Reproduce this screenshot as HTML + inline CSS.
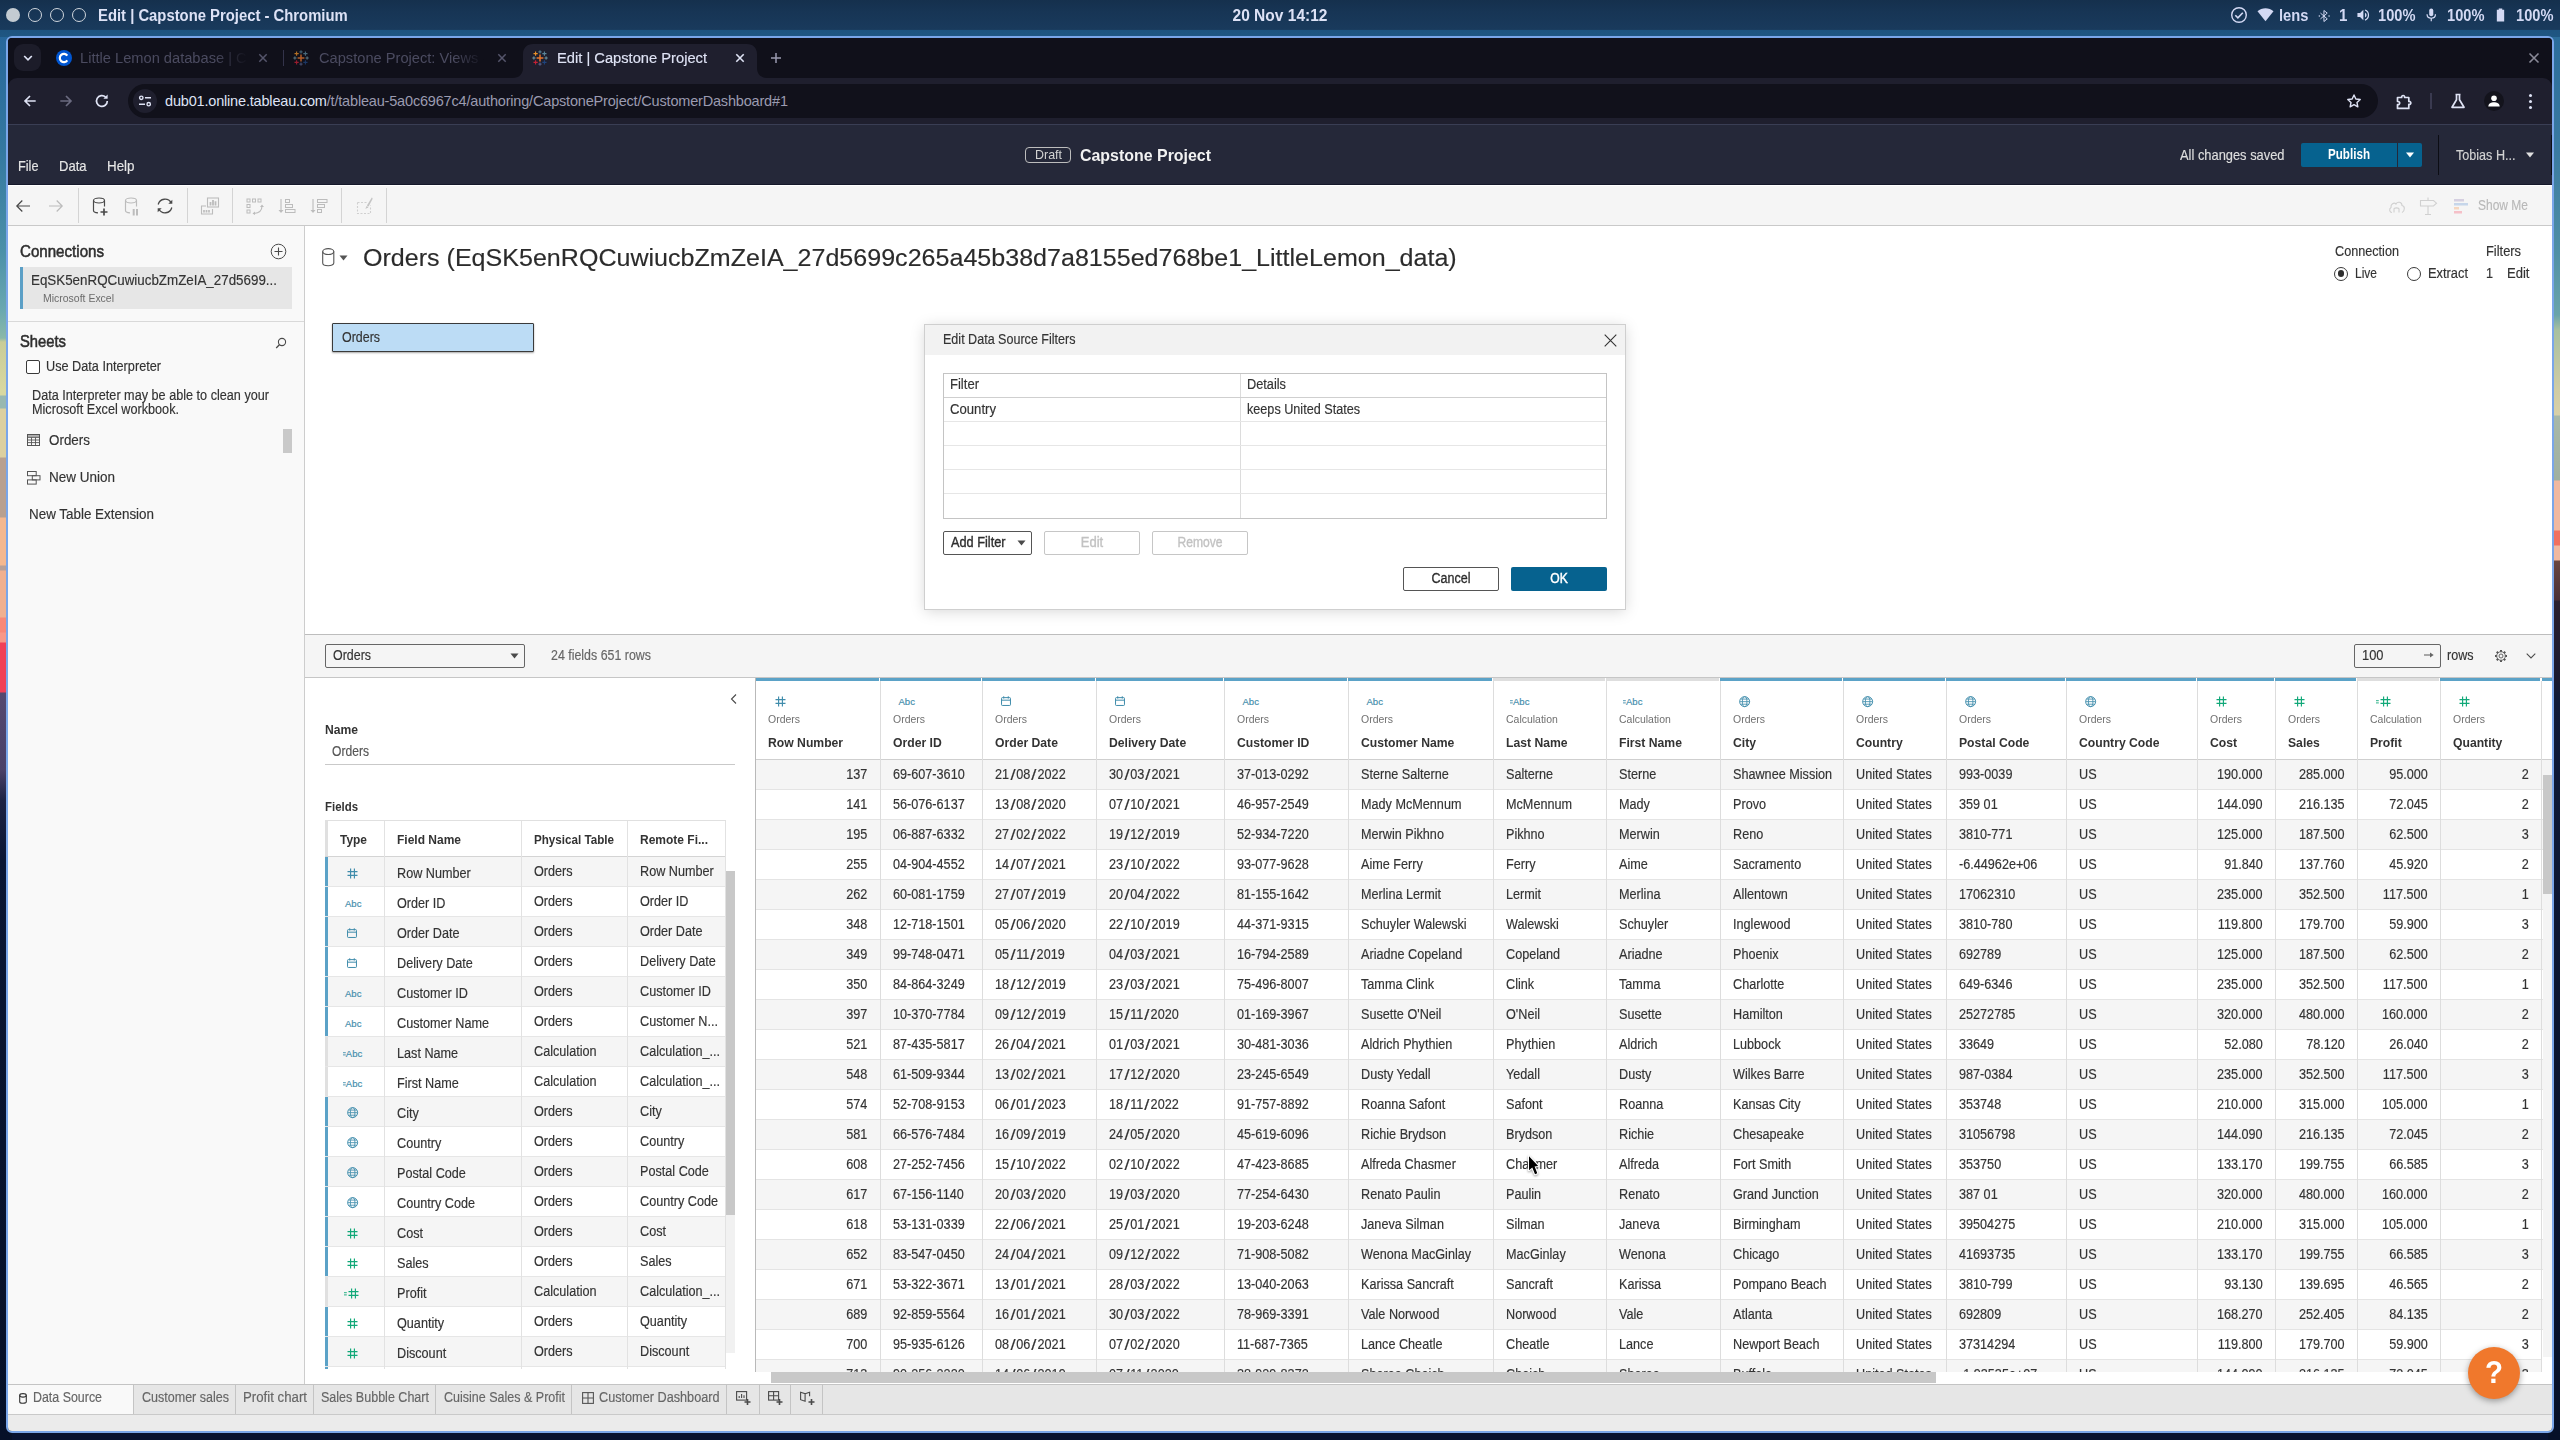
<!DOCTYPE html><html><head><meta charset="utf-8"><title>Edit | Capstone Project</title><style>
html,body{margin:0;padding:0;width:2560px;height:1440px;overflow:hidden;background:#071230;}
body{position:relative;font-family:"Liberation Sans",sans-serif;}
div{box-sizing:content-box;} svg{display:block;overflow:visible;}
</style></head><body>
<div style="position:absolute;left:0;top:0;width:2560px;height:1440px;background:#071230"></div>
<div style="position:absolute;left:0;top:0;width:12px;height:1440px;background:linear-gradient(to bottom,#1f5682 0px,#27669a 36px,#3478a0 150px,#4a90a8 250px,#6aa8b0 310px,#8ab8a8 338px,#c8cc98 342px,#d8d8a0 390px,#d8d8a0 395px,#98b8b0 396px,#98b8b0 408px,#dcd0a0 409px,#dcd0a0 457px,#b8a090 458px,#b8a090 517px,#f4b890 518px,#f4b890 565px,#b8a098 566px,#b8a098 570px,#f0b090 571px,#f0b090 617px,#f88878 618px,#f88878 632px,#f89888 633px,#f89888 642px,#f04058 643px,#f04058 692px,#544870 693px,#4a4068 770px,#1c2244 800px,#0a1634 860px,#061028 1440px)"></div>
<div style="position:absolute;left:2548px;top:0;width:12px;height:1440px;background:linear-gradient(to bottom,#1f5682 0px,#2b6c9a 36px,#3a7aa0 150px,#4f8fa5 250px,#6aa4aa 315px,#a8c0a0 330px,#d0cca4 390px,#d8d0a8 415px,#a8b8a8 416px,#a0b0a0 480px,#f0b8a0 481px,#f0b8a0 530px,#f07060 531px,#f07060 545px,#f0b8a0 546px,#f0b8a0 560px,#6a4640 561px,#4a3038 600px,#2a2030 601px,#1a1a30 680px,#0f1a38 700px,#061028 1440px)"></div>
<div style="position:absolute;left:0;top:0;width:2560px;height:37px;background:linear-gradient(to bottom,#15304d 0px,#173555 12px,#193a5c 29px,#1b3f62 30px,#1e5480 30.5px,#1f5783 37px)"></div>
<div style="position:absolute;left:6px;top:8px;width:14px;height:14px;background:#c3cbd2;border-radius:50%;"></div>
<div style="position:absolute;left:28px;top:8px;width:14px;height:14px;border-radius:50%;border:1.3px solid #cfd5dc;box-sizing:border-box;"></div>
<div style="position:absolute;left:50px;top:8px;width:14px;height:14px;border-radius:50%;border:1.3px solid #cfd5dc;box-sizing:border-box;"></div>
<div style="position:absolute;left:72px;top:8px;width:14px;height:14px;border-radius:50%;border:1.3px solid #cfd5dc;box-sizing:border-box;"></div>
<div style="position:absolute;top:5px;font-size:16.80px;line-height:22px;color:#dde2f6;white-space:pre;font-weight:bold;left:98.0px;transform:scaleX(0.8838);transform-origin:0 50%;">Edit | Capstone Project - Chromium</div>
<div style="position:absolute;top:5px;font-size:16.80px;line-height:22px;color:#dde2f6;white-space:pre;font-weight:bold;left:1079.5px;width:400px;text-align:center;transform:scaleX(0.9247);transform-origin:50% 50%;">20 Nov 14:12</div>
<svg style="position:absolute;left:2230px;top:6px;" width="18" height="18" viewBox="0 0 18 18" fill="none"><circle cx="9" cy="9" r="7.3" stroke="#d3d9f4" stroke-width="1.4"/><path d="M5.3 9.3l2.6 2.6 4.9-5.2" stroke="#d3d9f4" stroke-width="1.6"/></svg>
<svg style="position:absolute;left:2257px;top:8px;" width="17" height="14" viewBox="0 0 17 14" fill="none"><path d="M0.5 3.2C2.7 1.3 5.5 0.3 8.5 0.3s5.8 1 8 2.9L8.5 13.2z" fill="#d3d9f4"/></svg>
<div style="position:absolute;top:5px;font-size:16.80px;line-height:22px;color:#d3d9f4;white-space:pre;font-weight:bold;left:2278.5px;transform:scaleX(0.8775);transform-origin:0 50%;">lens</div>
<svg style="position:absolute;left:2317.5px;top:8.5px;" width="12.4" height="14" viewBox="0 0 15 17" fill="none"><path d="M3 5l8.2 7-4 3.2V1.8l4 3.2L3 12" stroke="#d3d9f4" stroke-width="1.2"/><circle cx="1.6" cy="8.5" r="0.9" fill="#d3d9f4"/><circle cx="13.4" cy="8.5" r="0.9" fill="#d3d9f4"/></svg>
<div style="position:absolute;top:5px;font-size:16.80px;line-height:22px;color:#d3d9f4;white-space:pre;font-weight:bold;left:2339.0px;transform:scaleX(0.9020);transform-origin:0 50%;">1</div>
<svg style="position:absolute;left:2357px;top:9px;" width="12.2" height="12.2" viewBox="0 0 14 14" fill="none"><path d="M0.5 4.7h3L7.3 1v12L3.5 9.3h-3z" fill="#d3d9f4"/><path d="M9.2 4.2c1.2.7 1.8 1.6 1.8 2.8s-.6 2.1-1.8 2.8z" fill="#d3d9f4"/><path d="M9.2 1.2c2.4.8 4 3 4 5.8s-1.6 5-4 5.800" stroke="#d3d9f4" stroke-width="1.4"/></svg>
<div style="position:absolute;top:5px;font-size:16.80px;line-height:22px;color:#d3d9f4;white-space:pre;font-weight:bold;left:2377.5px;transform:scaleX(0.8727);transform-origin:0 50%;">100%</div>
<svg style="position:absolute;left:2425.7px;top:8.3px;" width="10.5" height="14" viewBox="0 0 12 16" fill="none"><rect x="3.7" y="0.5" width="4.6" height="9" rx="2.3" fill="#d3d9f4"/><path d="M1.2 7.2c0 2.6 2.100 4.500 4.800 4.500s4.800-1.900 4.800-4.500M6 11.700V15" stroke="#d3d9f4" stroke-width="1.4"/></svg>
<div style="position:absolute;top:5px;font-size:16.80px;line-height:22px;color:#d3d9f4;white-space:pre;font-weight:bold;left:2446.5px;transform:scaleX(0.8727);transform-origin:0 50%;">100%</div>
<svg style="position:absolute;left:2495.5px;top:8px;" width="9" height="14" viewBox="0 0 10 16" fill="none"><path d="M3 0.5h4v1.5h2.2v13.500H0.800V2H3z" fill="#d3d9f4"/></svg>
<div style="position:absolute;top:5px;font-size:16.80px;line-height:22px;color:#d3d9f4;white-space:pre;font-weight:bold;left:2515.5px;transform:scaleX(0.8727);transform-origin:0 50%;">100%</div>
<div style="position:absolute;left:6px;top:36px;width:2544px;height:1393px;border:2px solid #7aa6e9;border-radius:6px;background:#10101a"></div>
<div id="win" style="position:absolute;left:0;top:0;width:2560px;height:1440px;clip-path:inset(38px 8px 9px 8px round 4px);">
<div style="position:absolute;left:8px;top:38px;width:2544px;height:40px;background:#10101a;"></div>
<div style="position:absolute;left:8px;top:78px;width:2544px;height:46px;background:#1f1f2e;border-radius:9px 9px 0 0;"></div>
<div style="position:absolute;left:8px;top:124px;width:2544px;height:1px;background:#3a3e54;"></div>
<div style="position:absolute;left:14px;top:44px;width:27px;height:27px;background:#1c1c29;border-radius:9px;"></div>
<svg style="position:absolute;left:22px;top:53px;" width="12" height="10" viewBox="0 0 12 10" fill="none"><path d="M2.2 3l3.800 3.800L9.800 3" stroke="#dfe3f5" stroke-width="1.7"/></svg>
<div style="position:absolute;left:56px;top:50px;width:16px;height:16px;background:#0056d2;border-radius:50%;"></div>
<svg style="position:absolute;left:56px;top:50px;" width="16" height="16" viewBox="0 0 16 16" fill="none"><path d="M11.3 5.700A4.100 4.100 0 1 0 11.300 10.300" stroke="#fff" stroke-width="2.2"/></svg>
<div style="position:absolute;left:80px;top:47px;width:168px;height:22px;overflow:hidden;-webkit-mask-image:linear-gradient(to right,#000 80%,transparent 100%);">
<div style="font-size:15.5px;line-height:22px;color:#4b4b60;white-space:pre;transform:scaleX(0.945);transform-origin:0 50%;">Little Lemon database | Coursera</div></div>
<svg style="position:absolute;left:258px;top:53px;" width="10" height="10" viewBox="0 0 10 10" fill="none"><path d="M1.300 1.300l7.400 7.400M8.700 1.300l-7.400 7.400" stroke="#55556b" stroke-width="1.500"/></svg>
<div style="position:absolute;left:283px;top:50px;width:1px;height:16px;background:#33334a;"></div>
<svg style="position:absolute;left:293px;top:50px;opacity:0.75;" width="16" height="16" viewBox="0 0 16 16" fill="none"><path d="M8 4.6v6.8M4.6 8h6.8" stroke="#e8762d" stroke-width="1.5"/><path d="M8 0.3v3.2M6.4 1.9h3.2" stroke="#59879b" stroke-width="1"/><path d="M8 12.5v3.2M6.4 14.1h3.2" stroke="#5b6591" stroke-width="1"/><path d="M1.9 6.4v3.2M0.3 8h3.2" stroke="#7199a6" stroke-width="1"/><path d="M14.1 6.4v3.2M12.5 8h3.2" stroke="#7199a6" stroke-width="1"/><path d="M3.6 1.5v4.2M1.5 3.6h4.2" stroke="#eb9129" stroke-width="1.1"/><path d="M12.4 1.5v4.2M10.3 3.6h4.2" stroke="#5b879b" stroke-width="1.1"/><path d="M3.6 10.3v4.2M1.5 12.4h4.2" stroke="#c72035" stroke-width="1.1"/><path d="M12.4 10.3v4.2M10.3 12.4h4.2" stroke="#1f447e" stroke-width="1.1"/></svg>
<div style="position:absolute;left:318.500px;top:47px;width:165px;height:22px;overflow:hidden;-webkit-mask-image:linear-gradient(to right,#000 82%,transparent 100%);">
<div style="font-size:15.5px;line-height:22px;color:#4b4b60;white-space:pre;transform:scaleX(0.945);transform-origin:0 50%;">Capstone Project: Views - Tableau</div></div>
<svg style="position:absolute;left:497px;top:53px;" width="10" height="10" viewBox="0 0 10 10" fill="none"><path d="M1.300 1.300l7.400 7.400M8.700 1.300l-7.400 7.400" stroke="#55556b" stroke-width="1.500"/></svg>
<svg style="position:absolute;left:513px;top:44px" width="254" height="34" viewBox="0 0 254 34"><path d="M0 34C6 34 10 30 10 24V10C10 4 14 0 20 0H234C240 0 244 4 244 10V24C244 30 248 34 254 34z" fill="#1f1f2e"/></svg>
<svg style="position:absolute;left:532px;top:50px;opacity:1;" width="16" height="16" viewBox="0 0 16 16" fill="none"><path d="M8 4.6v6.8M4.6 8h6.8" stroke="#e8762d" stroke-width="1.5"/><path d="M8 0.3v3.2M6.4 1.9h3.2" stroke="#59879b" stroke-width="1"/><path d="M8 12.5v3.2M6.4 14.1h3.2" stroke="#5b6591" stroke-width="1"/><path d="M1.9 6.4v3.2M0.3 8h3.2" stroke="#7199a6" stroke-width="1"/><path d="M14.1 6.4v3.2M12.5 8h3.2" stroke="#7199a6" stroke-width="1"/><path d="M3.6 1.5v4.2M1.5 3.6h4.2" stroke="#eb9129" stroke-width="1.1"/><path d="M12.4 1.5v4.2M10.3 3.6h4.2" stroke="#5b879b" stroke-width="1.1"/><path d="M3.6 10.3v4.2M1.5 12.4h4.2" stroke="#c72035" stroke-width="1.1"/><path d="M12.4 10.3v4.2M10.3 12.4h4.2" stroke="#1f447e" stroke-width="1.1"/></svg>
<div style="position:absolute;top:47px;font-size:15.50px;line-height:22px;color:#dfe3f5;white-space:pre;-webkit-text-stroke:0.16px #dfe3f5;left:556.5px;transform:scaleX(0.9479);transform-origin:0 50%;">Edit | Capstone Project</div>
<svg style="position:absolute;left:735px;top:53px;" width="10" height="10" viewBox="0 0 10 10" fill="none"><path d="M1.300 1.300l7.400 7.400M8.700 1.300l-7.400 7.400" stroke="#dfe3f5" stroke-width="1.600"/></svg>
<svg style="position:absolute;left:770px;top:52px;" width="12" height="12" viewBox="0 0 12 12" fill="none"><path d="M6 1v10M1 6h10" stroke="#9a9ab0" stroke-width="1.500"/></svg>
<svg style="position:absolute;left:2528px;top:52px;" width="12" height="12" viewBox="0 0 12 12" fill="none"><path d="M1.500 1.500l9 9M10.500 1.500l-9 9" stroke="#8a8a98" stroke-width="1.600"/></svg>
<svg style="position:absolute;left:23px;top:94px;" width="14" height="14" viewBox="0 0 16 16" fill="none"><path d="M14.500 8H2.500M8 2.300L2.300 8l5.700 5.700" stroke="#dfe3f5" stroke-width="1.900"/></svg>
<svg style="position:absolute;left:59px;top:94px;" width="14" height="14" viewBox="0 0 16 16" fill="none"><path d="M1.500 8h12M8 2.300L13.700 8 8 13.700" stroke="#6b6b80" stroke-width="1.900"/></svg>
<svg style="position:absolute;left:94px;top:93px;" width="16" height="16" viewBox="0 0 16 16" fill="none"><path d="M13.300 8A5.400 5.400 0 1 1 11.600 4.100" stroke="#dfe3f5" stroke-width="1.700"/><path d="M13.600 1.500v4.200H9.400z" fill="#dfe3f5"/></svg>
<div style="position:absolute;left:128px;top:84px;width:2250px;height:34px;background:#11111b;border-radius:17px;"></div>
<div style="position:absolute;left:133px;top:89px;width:24px;height:24px;background:#1f1f2e;border-radius:50%;"></div>
<svg style="position:absolute;left:138px;top:94px;" width="14" height="14" viewBox="0 0 14 14" fill="none"><circle cx="3.300" cy="3.800" r="1.700" stroke="#dfe3f5" stroke-width="1.400"/><path d="M7 3.800h6" stroke="#dfe3f5" stroke-width="1.500"/><circle cx="10.700" cy="10.200" r="1.700" stroke="#dfe3f5" stroke-width="1.400"/><path d="M1 10.200h6" stroke="#dfe3f5" stroke-width="1.500"/></svg>
<div style="position:absolute;left:165px;top:90px;font-size:14.500px;line-height:22px;letter-spacing:-0.181px;white-space:pre;color:#dfe3f5">dub01.online.tableau.com<span style="color:#9b9bb0">/t/tableau-5a0c6967c4/authoring/CapstoneProject/CustomerDashboard#1</span></div>
<svg style="position:absolute;left:2346px;top:93px;" width="16" height="16" viewBox="0 0 18 18" fill="none"><path d="M9 2.200l2.100 4.500 4.900.600-3.600 3.400.9 4.900L9 13.200l-4.300 2.400.9-4.900L2 7.300l4.900-.600z" stroke="#dfe3f5" stroke-width="1.600" stroke-linejoin="round"/></svg>
<svg style="position:absolute;left:2395px;top:92px;" width="19" height="19" viewBox="0 0 19 19" fill="none"><path d="M2.500 5.500h4.200c-.5-2.700 3.400-2.700 2.900 0h4.200v4c2.700-.5 2.700 3.400 0 2.900v4H2.500v-3.700c2.900.300 2.900-3.500 0-3.200z" stroke="#dfe3f5" stroke-width="1.700" stroke-linejoin="round"/></svg>
<div style="position:absolute;left:2430px;top:93px;width:1.5px;height:16px;background:#3a3a50;"></div>
<svg style="position:absolute;left:2449px;top:92px;" width="18" height="18" viewBox="0 0 18 18" fill="none"><path d="M6.500 2.500h5M7.500 2.500v5.300L3 15.300h12L10.500 7.800V2.500" stroke="#dfe3f5" stroke-width="1.700" stroke-linejoin="round"/></svg>
<div style="position:absolute;left:2484px;top:91px;width:20px;height:20px;background:#13131c;border-radius:50%;"></div>
<svg style="position:absolute;left:2486px;top:93px;" width="16" height="16" viewBox="0 0 16 16" fill="none"><circle cx="8" cy="5.300" r="2.800" fill="#fff"/><path d="M2.300 13.500c0-3 3-4.200 5.700-4.200s5.700 1.200 5.700 4.200z" fill="#fff"/></svg>
<div style="position:absolute;left:2528.5px;top:93.5px;width:3px;height:3px;background:#dfe3f5;border-radius:50%;"></div>
<div style="position:absolute;left:2528.5px;top:99.5px;width:3px;height:3px;background:#dfe3f5;border-radius:50%;"></div>
<div style="position:absolute;left:2528.5px;top:105.5px;width:3px;height:3px;background:#dfe3f5;border-radius:50%;"></div>
<div style="position:absolute;left:8px;top:125px;width:2544px;height:60px;background:#252839;"></div>
<div style="position:absolute;top:156px;font-size:15.00px;line-height:20px;color:#e6e6e6;white-space:pre;-webkit-text-stroke:0.16px #e6e6e6;left:18.0px;transform:scaleX(0.8481);transform-origin:0 50%;">File</div>
<div style="position:absolute;top:156px;font-size:15.00px;line-height:20px;color:#e6e6e6;white-space:pre;-webkit-text-stroke:0.16px #e6e6e6;left:59.0px;transform:scaleX(0.8679);transform-origin:0 50%;">Data</div>
<div style="position:absolute;top:156px;font-size:15.00px;line-height:20px;color:#e6e6e6;white-space:pre;-webkit-text-stroke:0.16px #e6e6e6;left:107.0px;transform:scaleX(0.8914);transform-origin:0 50%;">Help</div>
<div style="position:absolute;left:1025px;top:147px;width:46px;height:16px;border:1px solid #bdbdbd;border-radius:4px;box-sizing:border-box;"></div>
<div style="position:absolute;top:145px;font-size:13.00px;line-height:20px;color:#d4d4d4;white-space:pre;left:1034.5px;transform:scaleX(0.9584);transform-origin:0 50%;">Draft</div>
<div style="position:absolute;top:144px;font-size:17.00px;line-height:24px;color:#f2f2f2;white-space:pre;font-weight:bold;left:1079.5px;transform:scaleX(0.9370);transform-origin:0 50%;">Capstone Project</div>
<div style="position:absolute;top:145px;font-size:14.50px;line-height:20px;color:#dedede;white-space:pre;-webkit-text-stroke:0.16px #dedede;left:2180.0px;transform:scaleX(0.8879);transform-origin:0 50%;">All changes saved</div>
<div style="position:absolute;left:2301px;top:143px;width:96px;height:24px;background:#06628f;border-radius:2px 0 0 2px;"></div>
<div style="position:absolute;left:2398px;top:143px;width:24px;height:24px;background:#06628f;border-radius:0 2px 2px 0;"></div>
<div style="position:absolute;top:144px;font-size:14.50px;line-height:20px;color:#fff;white-space:pre;font-weight:bold;left:2149.0px;width:400px;text-align:center;transform:scaleX(0.8021);transform-origin:50% 50%;">Publish</div>
<svg style="position:absolute;left:2405px;top:152px;" width="10" height="6" viewBox="0 0 10 6" fill="none"><path d="M1 0.500h8L5 5.500z" fill="#fff"/></svg>
<div style="position:absolute;left:2438px;top:135px;width:1px;height:40px;background:#0c0d14;"></div>
<div style="position:absolute;left:2551px;top:135px;width:1px;height:40px;background:#0c0d14;"></div>
<div style="position:absolute;top:145px;font-size:14.50px;line-height:20px;color:#d2d2d2;white-space:pre;-webkit-text-stroke:0.16px #d2d2d2;left:2456.0px;transform:scaleX(0.8686);transform-origin:0 50%;">Tobias H...</div>
<svg style="position:absolute;left:2525px;top:152px;" width="10" height="6" viewBox="0 0 10 6" fill="none"><path d="M1 0.500h8L5 5.500z" fill="#e0e0e0"/></svg>
<div style="position:absolute;left:8px;top:184px;width:2544px;height:1px;background:#15182a;"></div>
<div style="position:absolute;left:8px;top:185px;width:2544px;height:40px;background:#f5f5f5;"></div>
<div style="position:absolute;left:8px;top:185px;width:2544px;height:1px;background:#ffffff;"></div>
<div style="position:absolute;left:8px;top:225px;width:2544px;height:1px;background:#c9c9c9;"></div>
<div style="position:absolute;left:78px;top:188px;width:1px;height:35px;background:#d4d4d4;"></div>
<div style="position:absolute;left:187px;top:188px;width:1px;height:35px;background:#d4d4d4;"></div>
<div style="position:absolute;left:232px;top:188px;width:1px;height:35px;background:#d4d4d4;"></div>
<div style="position:absolute;left:341px;top:188px;width:1px;height:35px;background:#d4d4d4;"></div>
<div style="position:absolute;left:386px;top:188px;width:1px;height:35px;background:#d4d4d4;"></div>
<svg style="position:absolute;left:15px;top:198px;" width="16" height="16" viewBox="0 0 16 16" fill="none"><path d="M15 8H2M7.300 2.500L1.800 8l5.500 5.500" stroke="#4a4a4a" stroke-width="1.200"/></svg>
<svg style="position:absolute;left:48px;top:198px;" width="16" height="16" viewBox="0 0 16 16" fill="none"><path d="M1 8h13M8.700 2.500L14.200 8l-5.500 5.500" stroke="#bcbcbc" stroke-width="1.200"/></svg>
<svg style="position:absolute;left:92px;top:197px;" width="18" height="20" viewBox="0 0 18 20" fill="none"><ellipse cx="7" cy="3.500" rx="5.500" ry="2.500" stroke="#4a4a4a" stroke-width="1.200"/><path d="M1.500 3.500v10c0 1.200 1.800 2.200 4.500 2.400M12.500 3.500v6" stroke="#4a4a4a" stroke-width="1.200"/><path d="M12 11.500v7M8.500 15h7" stroke="#4a4a4a" stroke-width="1.700"/></svg>
<svg style="position:absolute;left:124px;top:197px;" width="18" height="20" viewBox="0 0 18 20" fill="none"><ellipse cx="7" cy="3.500" rx="5.500" ry="2.500" stroke="#bcbcbc" stroke-width="1.200"/><path d="M1.500 3.500v10c0 1.200 1.800 2.200 4.500 2.400M12.500 3.500v6" stroke="#bcbcbc" stroke-width="1.200"/><path d="M9.700 12v6.500M13 12v6.500" stroke="#bcbcbc" stroke-width="2"/></svg>
<svg style="position:absolute;left:156px;top:197px;" width="18" height="18" viewBox="0 0 18 18" fill="none"><path d="M2.200 7.500A7 7 0 0 1 15.200 6M15.800 10.500A7 7 0 0 1 2.800 12" stroke="#4a4a4a" stroke-width="1.300"/><path d="M16.300 2.800v4h-4z" fill="#4a4a4a"/><path d="M1.700 15.200v-4h4z" fill="#4a4a4a"/></svg>
<svg style="position:absolute;left:200px;top:197px;" width="20" height="18" viewBox="0 0 20 18" fill="none"><rect x="7.500" y="1" width="11" height="9" stroke="#bcbcbc" stroke-width="1.100"/><path d="M10.500 8.500V5M13 8.500V3M15.500 8.500V4.200" stroke="#bcbcbc" stroke-width="1.800"/><path d="M6 9H1.500v8h11v-5" stroke="#bcbcbc" stroke-width="1.100"/><path d="M4 15.500v-2.500M6.500 15.500v-2.500M9 15.500v-2.500" stroke="#bcbcbc" stroke-width="1.700"/></svg>
<svg style="position:absolute;left:246px;top:198px;" width="18" height="17" viewBox="0 0 18 17" fill="none"><rect x="1" y="1" width="3" height="3" stroke="#bcbcbc"/><rect x="6.500" y="1" width="3" height="3" stroke="#bcbcbc"/><rect x="12" y="1" width="3" height="3" stroke="#bcbcbc"/><rect x="1" y="6.500" width="3" height="3" stroke="#bcbcbc"/><rect x="1" y="12" width="3" height="3" stroke="#bcbcbc"/><path d="M16 8c0 4-3 7-8 7.500" stroke="#bcbcbc" stroke-width="1.100"/><path d="M14 9l2-2.500L18 9zM9 13.500L6.500 15.500 9 17z" fill="#bcbcbc"/></svg>
<svg style="position:absolute;left:278px;top:198px;" width="18" height="17" viewBox="0 0 18 17" fill="none"><path d="M3 1v13" stroke="#bcbcbc" stroke-width="1.100"/><path d="M0.500 12l2.500 3 2.500-3z" fill="#bcbcbc"/><rect x="7.500" y="1.500" width="4" height="3" stroke="#bcbcbc"/><rect x="7.500" y="6.500" width="7" height="3" stroke="#bcbcbc"/><rect x="7.500" y="11.500" width="9.500" height="3" stroke="#bcbcbc"/></svg>
<svg style="position:absolute;left:310px;top:198px;" width="18" height="17" viewBox="0 0 18 17" fill="none"><path d="M3 1v13" stroke="#bcbcbc" stroke-width="1.100"/><path d="M0.500 12l2.500 3 2.500-3z" fill="#bcbcbc"/><rect x="7.500" y="1.500" width="9.500" height="3" stroke="#bcbcbc"/><rect x="7.500" y="6.500" width="7" height="3" stroke="#bcbcbc"/><rect x="7.500" y="11.500" width="4" height="3" stroke="#bcbcbc"/></svg>
<svg style="position:absolute;left:356px;top:197px;" width="18" height="18" viewBox="0 0 18 18" fill="none"><path d="M1.500 5.500h9M1.500 5.500v11h13v-8" stroke="#d0d0d0" stroke-width="1.100" stroke-dasharray="2 1.500"/><path d="M15.800 0.500c.8.300.9 1 .600 1.700l-3.800 7.300-1.700-1z" fill="#c4c4c4"/><path d="M10.600 9l1.800 1.100c-.6 1.300-2 1.700-3.300 1.300.8-.4 1.100-1.300 1.500-2.400z" fill="#c4c4c4"/></svg>
<svg style="position:absolute;left:2388px;top:198px;" width="18" height="16" viewBox="0 0 18 16" fill="none"><path d="M4 14.500C1.500 14.500 0.800 11 3 9.500 2.500 6 6 4 8 6c1.500-3 6-2 6 1.500 3 .500 3.200 5 0 7" stroke="#d0d0d0" stroke-width="1.100"/><path d="M6 14.500v-3.500c0-1.500 5-1.500 5 0v3.500" stroke="#d0d0d0" stroke-width="1.100"/></svg>
<svg style="position:absolute;left:2419px;top:197px;" width="20" height="19" viewBox="0 0 20 19" fill="none"><path d="M9 0.500v3M9 9v8.500M6 17.500h6" stroke="#d0d0d0" stroke-width="1.100"/><path d="M1.500 3.500h13l3 2.700-3 2.800h-13z" stroke="#d0d0d0" stroke-width="1.100"/></svg>
<svg style="position:absolute;left:2453px;top:198px;" width="16" height="16" viewBox="0 0 16 16" fill="none"><rect x="1" y="1" width="10" height="2.500" fill="#d5cfe0"/><rect x="1" y="5" width="14" height="2.500" fill="#c6d6ea"/><rect x="1" y="9" width="5" height="2.500" fill="#f5d6c0"/><rect x="1" y="13" width="8" height="2.500" fill="#f5c0c8"/></svg>
<div style="position:absolute;top:195px;font-size:14.50px;line-height:20px;color:#b8b8b8;white-space:pre;-webkit-text-stroke:0.16px #b8b8b8;left:2477.5px;transform:scaleX(0.8272);transform-origin:0 50%;">Show Me</div>
<div style="position:absolute;left:8px;top:226px;width:296px;height:1158px;background:#f9f9f9;"></div>
<div style="position:absolute;left:304px;top:226px;width:1px;height:1158px;background:#cdcdcd;"></div>
<div style="position:absolute;top:241px;font-size:17.00px;line-height:22px;color:#2e2e2e;white-space:pre;-webkit-text-stroke:0.55px #2e2e2e;left:20.0px;transform:scaleX(0.8888);transform-origin:0 50%;">Connections</div>
<svg style="position:absolute;left:270px;top:243px;" width="17" height="17" viewBox="0 0 17 17" fill="none"><circle cx="8.500" cy="8.500" r="7.300" stroke="#4a4a4a" stroke-width="1"/><path d="M8.500 4.500v8M4.500 8.500h8" stroke="#4a4a4a" stroke-width="1.100"/></svg>
<div style="position:absolute;left:20px;top:267px;width:272px;height:42px;background:#e6e6e6;"></div>
<div style="position:absolute;left:20px;top:267px;width:3px;height:42px;background:#5b9fc6;"></div>
<div style="position:absolute;top:270px;font-size:14.00px;line-height:20px;color:#333;white-space:pre;-webkit-text-stroke:0.16px #333;left:31.0px;transform:scaleX(0.9550);transform-origin:0 50%;">EqSK5enRQCuwiucbZmZeIA_27d5699...</div>
<div style="position:absolute;top:288px;font-size:11.00px;line-height:20px;color:#6c6c6c;white-space:pre;left:43.0px;transform:scaleX(0.9521);transform-origin:0 50%;">Microsoft Excel</div>
<div style="position:absolute;left:8px;top:321px;width:296px;height:1px;background:#d9d9d9;"></div>
<div style="position:absolute;top:331px;font-size:17.00px;line-height:22px;color:#2e2e2e;white-space:pre;-webkit-text-stroke:0.55px #2e2e2e;left:20.0px;transform:scaleX(0.8691);transform-origin:0 50%;">Sheets</div>
<svg style="position:absolute;left:275px;top:337px;" width="12" height="12" viewBox="0 0 12 12" fill="none"><circle cx="7" cy="5" r="3.600" stroke="#4a4a4a" stroke-width="1.100"/><path d="M4.400 7.700L1.200 11" stroke="#4a4a4a" stroke-width="1.300"/></svg>
<div style="position:absolute;left:26px;top:360px;width:14px;height:14px;background:#fff;border:1.500px solid #3a3a3a;border-radius:2px;box-sizing:border-box;"></div>
<div style="position:absolute;top:356px;font-size:14.00px;line-height:20px;color:#333;white-space:pre;-webkit-text-stroke:0.16px #333;left:46.0px;transform:scaleX(0.9067);transform-origin:0 50%;">Use Data Interpreter</div>
<div style="position:absolute;top:385px;font-size:14.00px;line-height:20px;color:#333;white-space:pre;-webkit-text-stroke:0.16px #333;left:32.0px;transform:scaleX(0.9037);transform-origin:0 50%;">Data Interpreter may be able to clean your</div>
<div style="position:absolute;top:399px;font-size:14.00px;line-height:20px;color:#333;white-space:pre;-webkit-text-stroke:0.16px #333;left:32.0px;transform:scaleX(0.9040);transform-origin:0 50%;">Microsoft Excel workbook.</div>
<svg style="position:absolute;left:27px;top:434px;" width="13" height="12" viewBox="0 0 13 12" fill="none"><rect x="0.500" y="0.500" width="12" height="11" stroke="#555" stroke-width="1"/><path d="M0.500 2h12M0.500 3.400h12M0.500 6h12M0.500 8.600h12M4.500 3.400v8M8.500 3.400v8" stroke="#555" stroke-width="0.900"/></svg>
<div style="position:absolute;top:430px;font-size:14.00px;line-height:20px;color:#333;white-space:pre;-webkit-text-stroke:0.16px #333;left:49.0px;transform:scaleX(0.9582);transform-origin:0 50%;">Orders</div>
<div style="position:absolute;left:283px;top:429px;width:9px;height:24px;background:#c9c9c9;"></div>
<svg style="position:absolute;left:27px;top:471px;" width="14" height="14" viewBox="0 0 14 14" fill="none"><rect x="0.500" y="0.500" width="8.700" height="4.200" stroke="#555"/><rect x="5.300" y="4.700" width="7.700" height="4.200" stroke="#555"/><rect x="0.500" y="8.900" width="8.700" height="4.200" stroke="#555"/></svg>
<div style="position:absolute;top:467px;font-size:14.00px;line-height:20px;color:#333;white-space:pre;-webkit-text-stroke:0.16px #333;left:49.0px;transform:scaleX(0.9638);transform-origin:0 50%;">New Union</div>
<div style="position:absolute;top:504px;font-size:14.00px;line-height:20px;color:#333;white-space:pre;-webkit-text-stroke:0.16px #333;left:29.0px;transform:scaleX(0.9579);transform-origin:0 50%;">New Table Extension</div>
<div style="position:absolute;left:305px;top:226px;width:2247px;height:408px;background:#fff;"></div>
<svg style="position:absolute;left:321.5px;top:248px;" width="12.5" height="18.5" viewBox="0 0 12.5 18.5" fill="none"><ellipse cx="6.25" cy="3.56" rx="5.55" ry="2.96" stroke="#555" stroke-width="1.1"/><path d="M0.7 3.56v11.38c0 3.7 11.1 3.7 11.1 0v-11.38" stroke="#555" stroke-width="1.1"/></svg>
<svg style="position:absolute;left:339px;top:255px;" width="9" height="6" viewBox="0 0 9 6" fill="none"><path d="M0.500 0.500h8L4.500 5.500z" fill="#555"/></svg>
<div style="position:absolute;top:241px;font-size:24.60px;line-height:34px;color:#2b2b2b;white-space:pre;-webkit-text-stroke:0.16px #2b2b2b;left:363.0px;transform:scaleX(1.0190);transform-origin:0 50%;">Orders (EqSK5enRQCuwiucbZmZeIA_27d5699c265a45b38d7a8155ed768be1_LittleLemon_data)</div>
<div style="position:absolute;left:332px;top:323px;width:202px;height:29px;background:#bcdcf5;border:1px solid #3a3a3a;box-sizing:border-box;border-radius:1px;box-shadow:0 1px 2px rgba(0,0,0,0.35);"></div>
<div style="position:absolute;top:327px;font-size:14.00px;line-height:20px;color:#333;white-space:pre;-webkit-text-stroke:0.16px #333;left:342.0px;transform:scaleX(0.8881);transform-origin:0 50%;">Orders</div>
<div style="position:absolute;top:241px;font-size:14.00px;line-height:20px;color:#333;white-space:pre;-webkit-text-stroke:0.16px #333;left:2334.5px;transform:scaleX(0.9036);transform-origin:0 50%;">Connection</div>
<div style="position:absolute;top:241px;font-size:14.00px;line-height:20px;color:#333;white-space:pre;-webkit-text-stroke:0.16px #333;left:2485.5px;transform:scaleX(0.9184);transform-origin:0 50%;">Filters</div>
<div style="position:absolute;left:2334px;top:266.5px;width:14px;height:14px;background:#fff;border:1.200px solid #3a3a3a;border-radius:50%;box-sizing:border-box;"></div>
<div style="position:absolute;left:2337.8px;top:270.3px;width:6.4px;height:6.4px;background:#2e2e2e;border-radius:50%;"></div>
<div style="position:absolute;top:263px;font-size:14.00px;line-height:20px;color:#333;white-space:pre;-webkit-text-stroke:0.16px #333;left:2355.0px;transform:scaleX(0.8566);transform-origin:0 50%;">Live</div>
<div style="position:absolute;left:2407px;top:266.5px;width:14px;height:14px;background:#fff;border:1.200px solid #3a3a3a;border-radius:50%;box-sizing:border-box;"></div>
<div style="position:absolute;top:263px;font-size:14.00px;line-height:20px;color:#333;white-space:pre;-webkit-text-stroke:0.16px #333;left:2428.0px;transform:scaleX(0.9181);transform-origin:0 50%;">Extract</div>
<div style="position:absolute;top:263px;font-size:14.00px;line-height:20px;color:#333;white-space:pre;-webkit-text-stroke:0.16px #333;left:2485.5px;transform:scaleX(0.9030);transform-origin:0 50%;">1</div>
<div style="position:absolute;top:263px;font-size:14.00px;line-height:20px;color:#333;white-space:pre;-webkit-text-stroke:0.16px #333;left:2506.5px;transform:scaleX(0.9326);transform-origin:0 50%;">Edit</div>
<div style="position:absolute;left:305px;top:634px;width:2247px;height:1px;background:#bdbdbd;"></div>
<div style="position:absolute;left:305px;top:635px;width:2247px;height:42px;background:#f5f5f5;"></div>
<div style="position:absolute;left:305px;top:677px;width:2247px;height:1px;background:#c6c6c6;"></div>
<div style="position:absolute;left:325px;top:644px;width:200px;height:24px;background:#f5f5f5;border:1px solid #666;box-sizing:border-box;border-radius:2px;"></div>
<div style="position:absolute;top:645px;font-size:14.00px;line-height:20px;color:#333;white-space:pre;-webkit-text-stroke:0.16px #333;left:333.0px;transform:scaleX(0.8881);transform-origin:0 50%;">Orders</div>
<svg style="position:absolute;left:510px;top:653px;" width="9" height="6" viewBox="0 0 9 6" fill="none"><path d="M0.500 0.500h8L4.500 5.500z" fill="#4a4a4a"/></svg>
<div style="position:absolute;top:645px;font-size:14.00px;line-height:20px;color:#666;white-space:pre;-webkit-text-stroke:0.16px #666;left:551.0px;transform:scaleX(0.8862);transform-origin:0 50%;">24 fields 651 rows</div>
<div style="position:absolute;left:2354px;top:644px;width:87px;height:24px;background:#f5f5f5;border:1px solid #666;box-sizing:border-box;border-radius:2px;"></div>
<div style="position:absolute;top:645px;font-size:14.00px;line-height:20px;color:#333;white-space:pre;-webkit-text-stroke:0.16px #333;left:2362.0px;transform:scaleX(0.9204);transform-origin:0 50%;">100</div>
<svg style="position:absolute;left:2423px;top:651px;" width="12" height="8" viewBox="0 0 12 8" fill="none"><path d="M1 4h7" stroke="#666" stroke-width="1.100"/><path d="M7 1.400L10.700 4 7 6.600z" fill="#666"/></svg>
<div style="position:absolute;top:645px;font-size:14.00px;line-height:20px;color:#333;white-space:pre;-webkit-text-stroke:0.16px #333;left:2447.0px;transform:scaleX(0.8965);transform-origin:0 50%;">rows</div>
<svg style="position:absolute;left:2494px;top:649px;" width="14" height="14" viewBox="0 0 14 14" fill="none"><circle cx="7" cy="7" r="2" stroke="#555" stroke-width="0.900"/><circle cx="7" cy="7" r="4.300" stroke="#555" stroke-width="0.900"/><path d="M11.30 7.00L13.00 7.00" stroke="#555" stroke-width="2"/><path d="M10.04 10.04L11.24 11.24" stroke="#555" stroke-width="2"/><path d="M7.00 11.30L7.00 13.00" stroke="#555" stroke-width="2"/><path d="M3.96 10.04L2.76 11.24" stroke="#555" stroke-width="2"/><path d="M2.70 7.00L1.00 7.00" stroke="#555" stroke-width="2"/><path d="M3.96 3.96L2.76 2.76" stroke="#555" stroke-width="2"/><path d="M7.00 2.70L7.00 1.00" stroke="#555" stroke-width="2"/><path d="M10.04 3.96L11.24 2.76" stroke="#555" stroke-width="2"/></svg>
<svg style="position:absolute;left:2526px;top:653px;" width="10" height="6" viewBox="0 0 10 6" fill="none"><path d="M0.700 0.700l4.300 4.200 4.300-4.200" stroke="#4a4a4a" stroke-width="1.050"/></svg>
<div style="position:absolute;left:305px;top:678px;width:450px;height:706px;background:#fff;"></div>
<svg style="position:absolute;left:729px;top:693px;" width="9" height="12" viewBox="0 0 9 12" fill="none"><path d="M7 1.500L2.500 6 7 10.500" stroke="#4a4a4a" stroke-width="1.100"/></svg>
<div style="position:absolute;top:720px;font-size:13.50px;line-height:20px;color:#333;white-space:pre;font-weight:bold;left:325.0px;transform:scaleX(0.8975);transform-origin:0 50%;">Name</div>
<div style="position:absolute;top:741px;font-size:14.00px;line-height:20px;color:#555;white-space:pre;-webkit-text-stroke:0.16px #555;left:332.0px;transform:scaleX(0.8647);transform-origin:0 50%;">Orders</div>
<div style="position:absolute;left:325px;top:764px;width:410px;height:1px;background:#c9c9c9;"></div>
<div style="position:absolute;top:797px;font-size:13.50px;line-height:20px;color:#333;white-space:pre;font-weight:bold;left:325.0px;transform:scaleX(0.8459);transform-origin:0 50%;">Fields</div>
<div style="position:absolute;left:325px;top:820px;width:401px;height:1px;background:#e0e0e0;"></div>
<div style="position:absolute;left:325px;top:821px;width:3px;height:35px;background:#e0e0e0;"></div>
<div style="position:absolute;top:830px;font-size:13.50px;line-height:20px;color:#333;white-space:pre;font-weight:bold;left:340.0px;transform:scaleX(0.8850);transform-origin:0 50%;">Type</div>
<div style="position:absolute;top:830px;font-size:13.50px;line-height:20px;color:#333;white-space:pre;font-weight:bold;left:397.0px;transform:scaleX(0.8886);transform-origin:0 50%;">Field Name</div>
<div style="position:absolute;top:830px;font-size:13.50px;line-height:20px;color:#333;white-space:pre;font-weight:bold;left:534.0px;transform:scaleX(0.8621);transform-origin:0 50%;">Physical Table</div>
<div style="position:absolute;top:830px;font-size:13.50px;line-height:20px;color:#333;white-space:pre;font-weight:bold;left:640.0px;transform:scaleX(0.8888);transform-origin:0 50%;">Remote Fi...</div>
<div style="position:absolute;left:325px;top:856px;width:400px;height:1px;background:#d4d4d4;"></div>
<div style="position:absolute;left:325px;top:857px;width:401px;height:512px;overflow:hidden">
<div style="position:absolute;left:0;top:0px;width:400px;height:29px;background:#f5f5f5"></div>
<div style="position:absolute;left:0;top:29px;width:400px;height:1px;background:#e6e6e6"></div>
<div style="position:absolute;left:0;top:0px;width:3px;height:29px;background:#5ba2c7"></div>
<div style="position:absolute;left:0;top:30px;width:400px;height:29px;background:#fff"></div>
<div style="position:absolute;left:0;top:59px;width:400px;height:1px;background:#e6e6e6"></div>
<div style="position:absolute;left:0;top:30px;width:3px;height:29px;background:#5ba2c7"></div>
<div style="position:absolute;left:0;top:60px;width:400px;height:29px;background:#f5f5f5"></div>
<div style="position:absolute;left:0;top:89px;width:400px;height:1px;background:#e6e6e6"></div>
<div style="position:absolute;left:0;top:60px;width:3px;height:29px;background:#5ba2c7"></div>
<div style="position:absolute;left:0;top:90px;width:400px;height:29px;background:#fff"></div>
<div style="position:absolute;left:0;top:119px;width:400px;height:1px;background:#e6e6e6"></div>
<div style="position:absolute;left:0;top:90px;width:3px;height:29px;background:#5ba2c7"></div>
<div style="position:absolute;left:0;top:120px;width:400px;height:29px;background:#f5f5f5"></div>
<div style="position:absolute;left:0;top:149px;width:400px;height:1px;background:#e6e6e6"></div>
<div style="position:absolute;left:0;top:120px;width:3px;height:29px;background:#5ba2c7"></div>
<div style="position:absolute;left:0;top:150px;width:400px;height:29px;background:#fff"></div>
<div style="position:absolute;left:0;top:179px;width:400px;height:1px;background:#e6e6e6"></div>
<div style="position:absolute;left:0;top:150px;width:3px;height:29px;background:#5ba2c7"></div>
<div style="position:absolute;left:0;top:180px;width:400px;height:29px;background:#f5f5f5"></div>
<div style="position:absolute;left:0;top:209px;width:400px;height:1px;background:#e6e6e6"></div>
<div style="position:absolute;left:0;top:180px;width:3px;height:29px;background:#e0e0e0"></div>
<div style="position:absolute;left:0;top:210px;width:400px;height:29px;background:#fff"></div>
<div style="position:absolute;left:0;top:239px;width:400px;height:1px;background:#e6e6e6"></div>
<div style="position:absolute;left:0;top:210px;width:3px;height:29px;background:#e0e0e0"></div>
<div style="position:absolute;left:0;top:240px;width:400px;height:29px;background:#f5f5f5"></div>
<div style="position:absolute;left:0;top:269px;width:400px;height:1px;background:#e6e6e6"></div>
<div style="position:absolute;left:0;top:240px;width:3px;height:29px;background:#5ba2c7"></div>
<div style="position:absolute;left:0;top:270px;width:400px;height:29px;background:#fff"></div>
<div style="position:absolute;left:0;top:299px;width:400px;height:1px;background:#e6e6e6"></div>
<div style="position:absolute;left:0;top:270px;width:3px;height:29px;background:#5ba2c7"></div>
<div style="position:absolute;left:0;top:300px;width:400px;height:29px;background:#f5f5f5"></div>
<div style="position:absolute;left:0;top:329px;width:400px;height:1px;background:#e6e6e6"></div>
<div style="position:absolute;left:0;top:300px;width:3px;height:29px;background:#5ba2c7"></div>
<div style="position:absolute;left:0;top:330px;width:400px;height:29px;background:#fff"></div>
<div style="position:absolute;left:0;top:359px;width:400px;height:1px;background:#e6e6e6"></div>
<div style="position:absolute;left:0;top:330px;width:3px;height:29px;background:#5ba2c7"></div>
<div style="position:absolute;left:0;top:360px;width:400px;height:29px;background:#f5f5f5"></div>
<div style="position:absolute;left:0;top:389px;width:400px;height:1px;background:#e6e6e6"></div>
<div style="position:absolute;left:0;top:360px;width:3px;height:29px;background:#5ba2c7"></div>
<div style="position:absolute;left:0;top:390px;width:400px;height:29px;background:#fff"></div>
<div style="position:absolute;left:0;top:419px;width:400px;height:1px;background:#e6e6e6"></div>
<div style="position:absolute;left:0;top:390px;width:3px;height:29px;background:#5ba2c7"></div>
<div style="position:absolute;left:0;top:420px;width:400px;height:29px;background:#f5f5f5"></div>
<div style="position:absolute;left:0;top:449px;width:400px;height:1px;background:#e6e6e6"></div>
<div style="position:absolute;left:0;top:420px;width:3px;height:29px;background:#e0e0e0"></div>
<div style="position:absolute;left:0;top:450px;width:400px;height:29px;background:#fff"></div>
<div style="position:absolute;left:0;top:479px;width:400px;height:1px;background:#e6e6e6"></div>
<div style="position:absolute;left:0;top:450px;width:3px;height:29px;background:#5ba2c7"></div>
<div style="position:absolute;left:0;top:480px;width:400px;height:29px;background:#f5f5f5"></div>
<div style="position:absolute;left:0;top:509px;width:400px;height:1px;background:#e6e6e6"></div>
<div style="position:absolute;left:0;top:480px;width:3px;height:29px;background:#5ba2c7"></div>
<div style="position:absolute;left:0;top:510px;width:400px;height:29px;background:#fff"></div>
<div style="position:absolute;left:0;top:539px;width:400px;height:1px;background:#e6e6e6"></div>
<div style="position:absolute;left:0;top:510px;width:3px;height:29px;background:#5ba2c7"></div>
</div>
<svg style="position:absolute;left:347px;top:867.8px;" width="11" height="11" viewBox="0 0 11 11" fill="none"><path d="M3.600 0.500v10M7.400 0.500v10M0.500 3.600h10M0.500 7.400h10" stroke="#3f8cab" stroke-width="1.150"/></svg>
<div style="position:absolute;top:863px;font-size:14.00px;line-height:20px;color:#333;white-space:pre;-webkit-text-stroke:0.16px #333;left:397.0px;transform:scaleX(0.9030);transform-origin:0 50%;">Row Number</div>
<div style="position:absolute;top:861px;font-size:14.00px;line-height:20px;color:#333;white-space:pre;-webkit-text-stroke:0.16px #333;left:534.0px;transform:scaleX(0.9030);transform-origin:0 50%;">Orders</div>
<div style="position:absolute;top:861px;font-size:14.00px;line-height:20px;color:#333;white-space:pre;-webkit-text-stroke:0.16px #333;left:640.0px;transform:scaleX(0.9030);transform-origin:0 50%;">Row Number</div>
<div style="position:absolute;left:345px;top:898px;font-size:9.5px;line-height:12px;color:#3f8cab;letter-spacing:0.020px;font-weight:normal;-webkit-text-stroke:0.150px #3f8cab;">Abc</div>
<div style="position:absolute;top:893px;font-size:14.00px;line-height:20px;color:#333;white-space:pre;-webkit-text-stroke:0.16px #333;left:397.0px;transform:scaleX(0.9030);transform-origin:0 50%;">Order ID</div>
<div style="position:absolute;top:891px;font-size:14.00px;line-height:20px;color:#333;white-space:pre;-webkit-text-stroke:0.16px #333;left:534.0px;transform:scaleX(0.9030);transform-origin:0 50%;">Orders</div>
<div style="position:absolute;top:891px;font-size:14.00px;line-height:20px;color:#333;white-space:pre;-webkit-text-stroke:0.16px #333;left:640.0px;transform:scaleX(0.9030);transform-origin:0 50%;">Order ID</div>
<svg style="position:absolute;left:347px;top:927.5px;" width="10" height="10" viewBox="0 0 11 11" fill="none"><rect x="0.600" y="1.800" width="9.800" height="8.600" rx="0.800" stroke="#3f8cab" stroke-width="1.100"/><path d="M0.600 4.600h9.800M3 0.300v2.500M8 0.300v2.500" stroke="#3f8cab" stroke-width="1.100"/></svg>
<div style="position:absolute;top:923px;font-size:14.00px;line-height:20px;color:#333;white-space:pre;-webkit-text-stroke:0.16px #333;left:397.0px;transform:scaleX(0.9030);transform-origin:0 50%;">Order Date</div>
<div style="position:absolute;top:921px;font-size:14.00px;line-height:20px;color:#333;white-space:pre;-webkit-text-stroke:0.16px #333;left:534.0px;transform:scaleX(0.9030);transform-origin:0 50%;">Orders</div>
<div style="position:absolute;top:921px;font-size:14.00px;line-height:20px;color:#333;white-space:pre;-webkit-text-stroke:0.16px #333;left:640.0px;transform:scaleX(0.9030);transform-origin:0 50%;">Order Date</div>
<svg style="position:absolute;left:347px;top:957.5px;" width="10" height="10" viewBox="0 0 11 11" fill="none"><rect x="0.600" y="1.800" width="9.800" height="8.600" rx="0.800" stroke="#3f8cab" stroke-width="1.100"/><path d="M0.600 4.600h9.800M3 0.300v2.500M8 0.300v2.500" stroke="#3f8cab" stroke-width="1.100"/></svg>
<div style="position:absolute;top:953px;font-size:14.00px;line-height:20px;color:#333;white-space:pre;-webkit-text-stroke:0.16px #333;left:397.0px;transform:scaleX(0.9030);transform-origin:0 50%;">Delivery Date</div>
<div style="position:absolute;top:951px;font-size:14.00px;line-height:20px;color:#333;white-space:pre;-webkit-text-stroke:0.16px #333;left:534.0px;transform:scaleX(0.9030);transform-origin:0 50%;">Orders</div>
<div style="position:absolute;top:951px;font-size:14.00px;line-height:20px;color:#333;white-space:pre;-webkit-text-stroke:0.16px #333;left:640.0px;transform:scaleX(0.9030);transform-origin:0 50%;">Delivery Date</div>
<div style="position:absolute;left:345px;top:988px;font-size:9.5px;line-height:12px;color:#3f8cab;letter-spacing:0.020px;font-weight:normal;-webkit-text-stroke:0.150px #3f8cab;">Abc</div>
<div style="position:absolute;top:983px;font-size:14.00px;line-height:20px;color:#333;white-space:pre;-webkit-text-stroke:0.16px #333;left:397.0px;transform:scaleX(0.9030);transform-origin:0 50%;">Customer ID</div>
<div style="position:absolute;top:981px;font-size:14.00px;line-height:20px;color:#333;white-space:pre;-webkit-text-stroke:0.16px #333;left:534.0px;transform:scaleX(0.9030);transform-origin:0 50%;">Orders</div>
<div style="position:absolute;top:981px;font-size:14.00px;line-height:20px;color:#333;white-space:pre;-webkit-text-stroke:0.16px #333;left:640.0px;transform:scaleX(0.9030);transform-origin:0 50%;">Customer ID</div>
<div style="position:absolute;left:345px;top:1018px;font-size:9.5px;line-height:12px;color:#3f8cab;letter-spacing:0.020px;font-weight:normal;-webkit-text-stroke:0.150px #3f8cab;">Abc</div>
<div style="position:absolute;top:1013px;font-size:14.00px;line-height:20px;color:#333;white-space:pre;-webkit-text-stroke:0.16px #333;left:397.0px;transform:scaleX(0.9030);transform-origin:0 50%;">Customer Name</div>
<div style="position:absolute;top:1011px;font-size:14.00px;line-height:20px;color:#333;white-space:pre;-webkit-text-stroke:0.16px #333;left:534.0px;transform:scaleX(0.9030);transform-origin:0 50%;">Orders</div>
<div style="position:absolute;top:1011px;font-size:14.00px;line-height:20px;color:#333;white-space:pre;-webkit-text-stroke:0.16px #333;left:640.0px;transform:scaleX(0.9030);transform-origin:0 50%;">Customer N...</div>
<svg style="position:absolute;left:343px;top:1052.4px;" width="3" height="4" viewBox="0 0 3 4" fill="none"><path d="M0 0.700h2.800M0 2.900h2.800" stroke="#3f8cab" stroke-width="0.900"/></svg>
<div style="position:absolute;left:345.8px;top:1048px;font-size:9.5px;line-height:12px;color:#3f8cab;letter-spacing:0.020px;font-weight:normal;-webkit-text-stroke:0.150px #3f8cab;">Abc</div>
<div style="position:absolute;top:1043px;font-size:14.00px;line-height:20px;color:#333;white-space:pre;-webkit-text-stroke:0.16px #333;left:397.0px;transform:scaleX(0.9030);transform-origin:0 50%;">Last Name</div>
<div style="position:absolute;top:1041px;font-size:14.00px;line-height:20px;color:#333;white-space:pre;-webkit-text-stroke:0.16px #333;left:534.0px;transform:scaleX(0.9030);transform-origin:0 50%;">Calculation</div>
<div style="position:absolute;top:1041px;font-size:14.00px;line-height:20px;color:#333;white-space:pre;-webkit-text-stroke:0.16px #333;left:640.0px;transform:scaleX(0.9030);transform-origin:0 50%;">Calculation_...</div>
<svg style="position:absolute;left:343px;top:1082.4px;" width="3" height="4" viewBox="0 0 3 4" fill="none"><path d="M0 0.700h2.800M0 2.900h2.800" stroke="#3f8cab" stroke-width="0.900"/></svg>
<div style="position:absolute;left:345.8px;top:1078px;font-size:9.5px;line-height:12px;color:#3f8cab;letter-spacing:0.020px;font-weight:normal;-webkit-text-stroke:0.150px #3f8cab;">Abc</div>
<div style="position:absolute;top:1073px;font-size:14.00px;line-height:20px;color:#333;white-space:pre;-webkit-text-stroke:0.16px #333;left:397.0px;transform:scaleX(0.9030);transform-origin:0 50%;">First Name</div>
<div style="position:absolute;top:1071px;font-size:14.00px;line-height:20px;color:#333;white-space:pre;-webkit-text-stroke:0.16px #333;left:534.0px;transform:scaleX(0.9030);transform-origin:0 50%;">Calculation</div>
<div style="position:absolute;top:1071px;font-size:14.00px;line-height:20px;color:#333;white-space:pre;-webkit-text-stroke:0.16px #333;left:640.0px;transform:scaleX(0.9030);transform-origin:0 50%;">Calculation_...</div>
<svg style="position:absolute;left:346.5px;top:1107.3px;" width="11.3" height="11.3" viewBox="0 0 12 12" fill="none"><circle cx="6" cy="6" r="5.300" stroke="#3f8cab" stroke-width="1"/><ellipse cx="6" cy="6" rx="2.400" ry="5.300" stroke="#3f8cab" stroke-width="0.900"/><path d="M0.700 6h10.600M1.500 3.300h9M1.500 8.700h9" stroke="#3f8cab" stroke-width="0.900"/></svg>
<div style="position:absolute;top:1103px;font-size:14.00px;line-height:20px;color:#333;white-space:pre;-webkit-text-stroke:0.16px #333;left:397.0px;transform:scaleX(0.9030);transform-origin:0 50%;">City</div>
<div style="position:absolute;top:1101px;font-size:14.00px;line-height:20px;color:#333;white-space:pre;-webkit-text-stroke:0.16px #333;left:534.0px;transform:scaleX(0.9030);transform-origin:0 50%;">Orders</div>
<div style="position:absolute;top:1101px;font-size:14.00px;line-height:20px;color:#333;white-space:pre;-webkit-text-stroke:0.16px #333;left:640.0px;transform:scaleX(0.9030);transform-origin:0 50%;">City</div>
<svg style="position:absolute;left:346.5px;top:1137.3px;" width="11.3" height="11.3" viewBox="0 0 12 12" fill="none"><circle cx="6" cy="6" r="5.300" stroke="#3f8cab" stroke-width="1"/><ellipse cx="6" cy="6" rx="2.400" ry="5.300" stroke="#3f8cab" stroke-width="0.900"/><path d="M0.700 6h10.600M1.500 3.300h9M1.500 8.700h9" stroke="#3f8cab" stroke-width="0.900"/></svg>
<div style="position:absolute;top:1133px;font-size:14.00px;line-height:20px;color:#333;white-space:pre;-webkit-text-stroke:0.16px #333;left:397.0px;transform:scaleX(0.9030);transform-origin:0 50%;">Country</div>
<div style="position:absolute;top:1131px;font-size:14.00px;line-height:20px;color:#333;white-space:pre;-webkit-text-stroke:0.16px #333;left:534.0px;transform:scaleX(0.9030);transform-origin:0 50%;">Orders</div>
<div style="position:absolute;top:1131px;font-size:14.00px;line-height:20px;color:#333;white-space:pre;-webkit-text-stroke:0.16px #333;left:640.0px;transform:scaleX(0.9030);transform-origin:0 50%;">Country</div>
<svg style="position:absolute;left:346.5px;top:1167.3px;" width="11.3" height="11.3" viewBox="0 0 12 12" fill="none"><circle cx="6" cy="6" r="5.300" stroke="#3f8cab" stroke-width="1"/><ellipse cx="6" cy="6" rx="2.400" ry="5.300" stroke="#3f8cab" stroke-width="0.900"/><path d="M0.700 6h10.600M1.500 3.300h9M1.500 8.700h9" stroke="#3f8cab" stroke-width="0.900"/></svg>
<div style="position:absolute;top:1163px;font-size:14.00px;line-height:20px;color:#333;white-space:pre;-webkit-text-stroke:0.16px #333;left:397.0px;transform:scaleX(0.9030);transform-origin:0 50%;">Postal Code</div>
<div style="position:absolute;top:1161px;font-size:14.00px;line-height:20px;color:#333;white-space:pre;-webkit-text-stroke:0.16px #333;left:534.0px;transform:scaleX(0.9030);transform-origin:0 50%;">Orders</div>
<div style="position:absolute;top:1161px;font-size:14.00px;line-height:20px;color:#333;white-space:pre;-webkit-text-stroke:0.16px #333;left:640.0px;transform:scaleX(0.9030);transform-origin:0 50%;">Postal Code</div>
<svg style="position:absolute;left:346.5px;top:1197.3px;" width="11.3" height="11.3" viewBox="0 0 12 12" fill="none"><circle cx="6" cy="6" r="5.300" stroke="#3f8cab" stroke-width="1"/><ellipse cx="6" cy="6" rx="2.400" ry="5.300" stroke="#3f8cab" stroke-width="0.900"/><path d="M0.700 6h10.600M1.500 3.300h9M1.500 8.700h9" stroke="#3f8cab" stroke-width="0.900"/></svg>
<div style="position:absolute;top:1193px;font-size:14.00px;line-height:20px;color:#333;white-space:pre;-webkit-text-stroke:0.16px #333;left:397.0px;transform:scaleX(0.9030);transform-origin:0 50%;">Country Code</div>
<div style="position:absolute;top:1191px;font-size:14.00px;line-height:20px;color:#333;white-space:pre;-webkit-text-stroke:0.16px #333;left:534.0px;transform:scaleX(0.9030);transform-origin:0 50%;">Orders</div>
<div style="position:absolute;top:1191px;font-size:14.00px;line-height:20px;color:#333;white-space:pre;-webkit-text-stroke:0.16px #333;left:640.0px;transform:scaleX(0.9030);transform-origin:0 50%;">Country Code</div>
<svg style="position:absolute;left:347px;top:1227.8px;" width="11" height="11" viewBox="0 0 11 11" fill="none"><path d="M3.600 0.500v10M7.400 0.500v10M0.500 3.600h10M0.500 7.400h10" stroke="#10a878" stroke-width="1.150"/></svg>
<div style="position:absolute;top:1223px;font-size:14.00px;line-height:20px;color:#333;white-space:pre;-webkit-text-stroke:0.16px #333;left:397.0px;transform:scaleX(0.9030);transform-origin:0 50%;">Cost</div>
<div style="position:absolute;top:1221px;font-size:14.00px;line-height:20px;color:#333;white-space:pre;-webkit-text-stroke:0.16px #333;left:534.0px;transform:scaleX(0.9030);transform-origin:0 50%;">Orders</div>
<div style="position:absolute;top:1221px;font-size:14.00px;line-height:20px;color:#333;white-space:pre;-webkit-text-stroke:0.16px #333;left:640.0px;transform:scaleX(0.9030);transform-origin:0 50%;">Cost</div>
<svg style="position:absolute;left:347px;top:1257.8px;" width="11" height="11" viewBox="0 0 11 11" fill="none"><path d="M3.600 0.500v10M7.400 0.500v10M0.500 3.600h10M0.500 7.400h10" stroke="#10a878" stroke-width="1.150"/></svg>
<div style="position:absolute;top:1253px;font-size:14.00px;line-height:20px;color:#333;white-space:pre;-webkit-text-stroke:0.16px #333;left:397.0px;transform:scaleX(0.9030);transform-origin:0 50%;">Sales</div>
<div style="position:absolute;top:1251px;font-size:14.00px;line-height:20px;color:#333;white-space:pre;-webkit-text-stroke:0.16px #333;left:534.0px;transform:scaleX(0.9030);transform-origin:0 50%;">Orders</div>
<div style="position:absolute;top:1251px;font-size:14.00px;line-height:20px;color:#333;white-space:pre;-webkit-text-stroke:0.16px #333;left:640.0px;transform:scaleX(0.9030);transform-origin:0 50%;">Sales</div>
<svg style="position:absolute;left:343.7px;top:1291.8px;" width="3" height="4" viewBox="0 0 3 4" fill="none"><path d="M0 0.700h2.800M0 2.900h2.800" stroke="#10a878" stroke-width="0.900"/></svg>
<svg style="position:absolute;left:348px;top:1287.8px;" width="11" height="11" viewBox="0 0 11 11" fill="none"><path d="M3.600 0.500v10M7.400 0.500v10M0.500 3.600h10M0.500 7.400h10" stroke="#10a878" stroke-width="1.150"/></svg>
<div style="position:absolute;top:1283px;font-size:14.00px;line-height:20px;color:#333;white-space:pre;-webkit-text-stroke:0.16px #333;left:397.0px;transform:scaleX(0.9030);transform-origin:0 50%;">Profit</div>
<div style="position:absolute;top:1281px;font-size:14.00px;line-height:20px;color:#333;white-space:pre;-webkit-text-stroke:0.16px #333;left:534.0px;transform:scaleX(0.9030);transform-origin:0 50%;">Calculation</div>
<div style="position:absolute;top:1281px;font-size:14.00px;line-height:20px;color:#333;white-space:pre;-webkit-text-stroke:0.16px #333;left:640.0px;transform:scaleX(0.9030);transform-origin:0 50%;">Calculation_...</div>
<svg style="position:absolute;left:347px;top:1317.8px;" width="11" height="11" viewBox="0 0 11 11" fill="none"><path d="M3.600 0.500v10M7.400 0.500v10M0.500 3.600h10M0.500 7.400h10" stroke="#10a878" stroke-width="1.150"/></svg>
<div style="position:absolute;top:1313px;font-size:14.00px;line-height:20px;color:#333;white-space:pre;-webkit-text-stroke:0.16px #333;left:397.0px;transform:scaleX(0.9030);transform-origin:0 50%;">Quantity</div>
<div style="position:absolute;top:1311px;font-size:14.00px;line-height:20px;color:#333;white-space:pre;-webkit-text-stroke:0.16px #333;left:534.0px;transform:scaleX(0.9030);transform-origin:0 50%;">Orders</div>
<div style="position:absolute;top:1311px;font-size:14.00px;line-height:20px;color:#333;white-space:pre;-webkit-text-stroke:0.16px #333;left:640.0px;transform:scaleX(0.9030);transform-origin:0 50%;">Quantity</div>
<svg style="position:absolute;left:347px;top:1347.8px;" width="11" height="11" viewBox="0 0 11 11" fill="none"><path d="M3.600 0.500v10M7.400 0.500v10M0.500 3.600h10M0.500 7.400h10" stroke="#10a878" stroke-width="1.150"/></svg>
<div style="position:absolute;top:1343px;font-size:14.00px;line-height:20px;color:#333;white-space:pre;-webkit-text-stroke:0.16px #333;left:397.0px;transform:scaleX(0.9030);transform-origin:0 50%;">Discount</div>
<div style="position:absolute;top:1341px;font-size:14.00px;line-height:20px;color:#333;white-space:pre;-webkit-text-stroke:0.16px #333;left:534.0px;transform:scaleX(0.9030);transform-origin:0 50%;">Orders</div>
<div style="position:absolute;top:1341px;font-size:14.00px;line-height:20px;color:#333;white-space:pre;-webkit-text-stroke:0.16px #333;left:640.0px;transform:scaleX(0.9030);transform-origin:0 50%;">Discount</div>
<div style="position:absolute;left:384px;top:821px;width:1px;height:548px;background:#e2e2e2;"></div>
<div style="position:absolute;left:521px;top:821px;width:1px;height:548px;background:#e2e2e2;"></div>
<div style="position:absolute;left:627px;top:821px;width:1px;height:548px;background:#e2e2e2;"></div>
<div style="position:absolute;left:725px;top:821px;width:1px;height:548px;background:#e2e2e2;"></div>
<div style="position:absolute;left:726px;top:871px;width:9px;height:482px;background:#f1f1f1;"></div>
<div style="position:absolute;left:726px;top:871px;width:9px;height:344px;background:#c8c8c8;"></div>
<div style="position:absolute;left:755px;top:678px;width:1797px;height:706px;background:#fff;"></div>
<div style="position:absolute;left:756px;top:678px;width:123px;height:3px;background:#5ba2c7;"></div>
<div style="position:absolute;left:880px;top:678px;width:101px;height:3px;background:#5ba2c7;"></div>
<div style="position:absolute;left:982px;top:678px;width:113px;height:3px;background:#5ba2c7;"></div>
<div style="position:absolute;left:1096px;top:678px;width:127px;height:3px;background:#5ba2c7;"></div>
<div style="position:absolute;left:1224px;top:678px;width:123px;height:3px;background:#5ba2c7;"></div>
<div style="position:absolute;left:1348px;top:678px;width:144px;height:3px;background:#5ba2c7;"></div>
<div style="position:absolute;left:1493px;top:678px;width:112px;height:3px;background:#dedede;"></div>
<div style="position:absolute;left:1606px;top:678px;width:113px;height:3px;background:#dedede;"></div>
<div style="position:absolute;left:1720px;top:678px;width:122px;height:3px;background:#5ba2c7;"></div>
<div style="position:absolute;left:1843px;top:678px;width:102px;height:3px;background:#5ba2c7;"></div>
<div style="position:absolute;left:1946px;top:678px;width:119px;height:3px;background:#5ba2c7;"></div>
<div style="position:absolute;left:2066px;top:678px;width:130px;height:3px;background:#5ba2c7;"></div>
<div style="position:absolute;left:2197px;top:678px;width:77px;height:3px;background:#5ba2c7;"></div>
<div style="position:absolute;left:2275px;top:678px;width:81px;height:3px;background:#5ba2c7;"></div>
<div style="position:absolute;left:2357px;top:678px;width:82px;height:3px;background:#dedede;"></div>
<div style="position:absolute;left:2440px;top:678px;width:100px;height:3px;background:#5ba2c7;"></div>
<div style="position:absolute;left:2542px;top:678px;width:10px;height:3px;background:#5ba2c7;"></div>
<div style="position:absolute;left:755px;top:760px;width:1797px;height:612px;overflow:hidden">
<div style="position:absolute;left:0;top:0px;width:1797px;height:29px;background:#f5f5f5"></div>
<div style="position:absolute;left:0;top:29px;width:1797px;height:1px;background:#e4e4e4"></div>
<div style="position:absolute;left:0;top:30px;width:1797px;height:29px;background:#fff"></div>
<div style="position:absolute;left:0;top:59px;width:1797px;height:1px;background:#e4e4e4"></div>
<div style="position:absolute;left:0;top:60px;width:1797px;height:29px;background:#f5f5f5"></div>
<div style="position:absolute;left:0;top:89px;width:1797px;height:1px;background:#e4e4e4"></div>
<div style="position:absolute;left:0;top:90px;width:1797px;height:29px;background:#fff"></div>
<div style="position:absolute;left:0;top:119px;width:1797px;height:1px;background:#e4e4e4"></div>
<div style="position:absolute;left:0;top:120px;width:1797px;height:29px;background:#f5f5f5"></div>
<div style="position:absolute;left:0;top:149px;width:1797px;height:1px;background:#e4e4e4"></div>
<div style="position:absolute;left:0;top:150px;width:1797px;height:29px;background:#fff"></div>
<div style="position:absolute;left:0;top:179px;width:1797px;height:1px;background:#e4e4e4"></div>
<div style="position:absolute;left:0;top:180px;width:1797px;height:29px;background:#f5f5f5"></div>
<div style="position:absolute;left:0;top:209px;width:1797px;height:1px;background:#e4e4e4"></div>
<div style="position:absolute;left:0;top:210px;width:1797px;height:29px;background:#fff"></div>
<div style="position:absolute;left:0;top:239px;width:1797px;height:1px;background:#e4e4e4"></div>
<div style="position:absolute;left:0;top:240px;width:1797px;height:29px;background:#f5f5f5"></div>
<div style="position:absolute;left:0;top:269px;width:1797px;height:1px;background:#e4e4e4"></div>
<div style="position:absolute;left:0;top:270px;width:1797px;height:29px;background:#fff"></div>
<div style="position:absolute;left:0;top:299px;width:1797px;height:1px;background:#e4e4e4"></div>
<div style="position:absolute;left:0;top:300px;width:1797px;height:29px;background:#f5f5f5"></div>
<div style="position:absolute;left:0;top:329px;width:1797px;height:1px;background:#e4e4e4"></div>
<div style="position:absolute;left:0;top:330px;width:1797px;height:29px;background:#fff"></div>
<div style="position:absolute;left:0;top:359px;width:1797px;height:1px;background:#e4e4e4"></div>
<div style="position:absolute;left:0;top:360px;width:1797px;height:29px;background:#f5f5f5"></div>
<div style="position:absolute;left:0;top:389px;width:1797px;height:1px;background:#e4e4e4"></div>
<div style="position:absolute;left:0;top:390px;width:1797px;height:29px;background:#fff"></div>
<div style="position:absolute;left:0;top:419px;width:1797px;height:1px;background:#e4e4e4"></div>
<div style="position:absolute;left:0;top:420px;width:1797px;height:29px;background:#f5f5f5"></div>
<div style="position:absolute;left:0;top:449px;width:1797px;height:1px;background:#e4e4e4"></div>
<div style="position:absolute;left:0;top:450px;width:1797px;height:29px;background:#fff"></div>
<div style="position:absolute;left:0;top:479px;width:1797px;height:1px;background:#e4e4e4"></div>
<div style="position:absolute;left:0;top:480px;width:1797px;height:29px;background:#f5f5f5"></div>
<div style="position:absolute;left:0;top:509px;width:1797px;height:1px;background:#e4e4e4"></div>
<div style="position:absolute;left:0;top:510px;width:1797px;height:29px;background:#fff"></div>
<div style="position:absolute;left:0;top:539px;width:1797px;height:1px;background:#e4e4e4"></div>
<div style="position:absolute;left:0;top:540px;width:1797px;height:29px;background:#f5f5f5"></div>
<div style="position:absolute;left:0;top:569px;width:1797px;height:1px;background:#e4e4e4"></div>
<div style="position:absolute;left:0;top:570px;width:1797px;height:29px;background:#fff"></div>
<div style="position:absolute;left:0;top:599px;width:1797px;height:1px;background:#e4e4e4"></div>
<div style="position:absolute;left:0;top:600px;width:1797px;height:29px;background:#f5f5f5"></div>
<div style="position:absolute;left:0;top:629px;width:1797px;height:1px;background:#e4e4e4"></div>
</div>
<div style="position:absolute;left:756px;top:759px;width:1796px;height:1px;background:#cfcfcf;"></div>
<div style="position:absolute;left:755px;top:678px;width:1px;height:694px;background:#b9b9b9;"></div>
<div style="position:absolute;left:880px;top:681px;width:1px;height:691px;background:#dddddd;"></div>
<div style="position:absolute;left:982px;top:681px;width:1px;height:691px;background:#dddddd;"></div>
<div style="position:absolute;left:1096px;top:681px;width:1px;height:691px;background:#dddddd;"></div>
<div style="position:absolute;left:1224px;top:681px;width:1px;height:691px;background:#dddddd;"></div>
<div style="position:absolute;left:1348px;top:681px;width:1px;height:691px;background:#dddddd;"></div>
<div style="position:absolute;left:1493px;top:681px;width:1px;height:691px;background:#dddddd;"></div>
<div style="position:absolute;left:1606px;top:681px;width:1px;height:691px;background:#dddddd;"></div>
<div style="position:absolute;left:1720px;top:681px;width:1px;height:691px;background:#dddddd;"></div>
<div style="position:absolute;left:1843px;top:681px;width:1px;height:691px;background:#dddddd;"></div>
<div style="position:absolute;left:1946px;top:681px;width:1px;height:691px;background:#dddddd;"></div>
<div style="position:absolute;left:2066px;top:681px;width:1px;height:691px;background:#dddddd;"></div>
<div style="position:absolute;left:2197px;top:681px;width:1px;height:691px;background:#dddddd;"></div>
<div style="position:absolute;left:2275px;top:681px;width:1px;height:691px;background:#dddddd;"></div>
<div style="position:absolute;left:2357px;top:681px;width:1px;height:691px;background:#dddddd;"></div>
<div style="position:absolute;left:2440px;top:681px;width:1px;height:691px;background:#dddddd;"></div>
<div style="position:absolute;left:2541px;top:681px;width:1px;height:691px;background:#dddddd;"></div>
<svg style="position:absolute;left:775px;top:695.5px;" width="11" height="11" viewBox="0 0 11 11" fill="none"><path d="M3.600 0.500v10M7.400 0.500v10M0.500 3.600h10M0.500 7.400h10" stroke="#3f8cab" stroke-width="1.150"/></svg>
<div style="position:absolute;top:709px;font-size:10.80px;line-height:20px;color:#707070;white-space:pre;left:768.0px;transform:scaleX(0.9700);transform-origin:0 50%;">Orders</div>
<div style="position:absolute;top:733px;font-size:13.50px;line-height:20px;color:#333;white-space:pre;font-weight:bold;left:768.0px;transform:scaleX(0.9020);transform-origin:0 50%;">Row Number</div>
<div style="position:absolute;left:898.5px;top:695.7px;font-size:9.5px;line-height:12px;color:#3f8cab;letter-spacing:0.020px;font-weight:normal;-webkit-text-stroke:0.150px #3f8cab;">Abc</div>
<div style="position:absolute;top:709px;font-size:10.80px;line-height:20px;color:#707070;white-space:pre;left:893.0px;transform:scaleX(0.9700);transform-origin:0 50%;">Orders</div>
<div style="position:absolute;top:733px;font-size:13.50px;line-height:20px;color:#333;white-space:pre;font-weight:bold;left:893.0px;transform:scaleX(0.9020);transform-origin:0 50%;">Order ID</div>
<svg style="position:absolute;left:1001px;top:696px;" width="10" height="10" viewBox="0 0 11 11" fill="none"><rect x="0.600" y="1.800" width="9.800" height="8.600" rx="0.800" stroke="#3f8cab" stroke-width="1.100"/><path d="M0.600 4.600h9.800M3 0.300v2.500M8 0.300v2.500" stroke="#3f8cab" stroke-width="1.100"/></svg>
<div style="position:absolute;top:709px;font-size:10.80px;line-height:20px;color:#707070;white-space:pre;left:995.0px;transform:scaleX(0.9700);transform-origin:0 50%;">Orders</div>
<div style="position:absolute;top:733px;font-size:13.50px;line-height:20px;color:#333;white-space:pre;font-weight:bold;left:995.0px;transform:scaleX(0.9020);transform-origin:0 50%;">Order Date</div>
<svg style="position:absolute;left:1115px;top:696px;" width="10" height="10" viewBox="0 0 11 11" fill="none"><rect x="0.600" y="1.800" width="9.800" height="8.600" rx="0.800" stroke="#3f8cab" stroke-width="1.100"/><path d="M0.600 4.600h9.800M3 0.300v2.500M8 0.300v2.500" stroke="#3f8cab" stroke-width="1.100"/></svg>
<div style="position:absolute;top:709px;font-size:10.80px;line-height:20px;color:#707070;white-space:pre;left:1109.0px;transform:scaleX(0.9700);transform-origin:0 50%;">Orders</div>
<div style="position:absolute;top:733px;font-size:13.50px;line-height:20px;color:#333;white-space:pre;font-weight:bold;left:1109.0px;transform:scaleX(0.9020);transform-origin:0 50%;">Delivery Date</div>
<div style="position:absolute;left:1242.5px;top:695.7px;font-size:9.5px;line-height:12px;color:#3f8cab;letter-spacing:0.020px;font-weight:normal;-webkit-text-stroke:0.150px #3f8cab;">Abc</div>
<div style="position:absolute;top:709px;font-size:10.80px;line-height:20px;color:#707070;white-space:pre;left:1237.0px;transform:scaleX(0.9700);transform-origin:0 50%;">Orders</div>
<div style="position:absolute;top:733px;font-size:13.50px;line-height:20px;color:#333;white-space:pre;font-weight:bold;left:1237.0px;transform:scaleX(0.9020);transform-origin:0 50%;">Customer ID</div>
<div style="position:absolute;left:1366.5px;top:695.7px;font-size:9.5px;line-height:12px;color:#3f8cab;letter-spacing:0.020px;font-weight:normal;-webkit-text-stroke:0.150px #3f8cab;">Abc</div>
<div style="position:absolute;top:709px;font-size:10.80px;line-height:20px;color:#707070;white-space:pre;left:1361.0px;transform:scaleX(0.9700);transform-origin:0 50%;">Orders</div>
<div style="position:absolute;top:733px;font-size:13.50px;line-height:20px;color:#333;white-space:pre;font-weight:bold;left:1361.0px;transform:scaleX(0.9020);transform-origin:0 50%;">Customer Name</div>
<svg style="position:absolute;left:1510.2px;top:700.1px;" width="3" height="4" viewBox="0 0 3 4" fill="none"><path d="M0 0.700h2.800M0 2.900h2.800" stroke="#3f8cab" stroke-width="0.900"/></svg>
<div style="position:absolute;left:1513px;top:695.7px;font-size:9.5px;line-height:12px;color:#3f8cab;letter-spacing:0.020px;font-weight:normal;-webkit-text-stroke:0.150px #3f8cab;">Abc</div>
<div style="position:absolute;top:709px;font-size:10.80px;line-height:20px;color:#707070;white-space:pre;left:1506.0px;transform:scaleX(0.9700);transform-origin:0 50%;">Calculation</div>
<div style="position:absolute;top:733px;font-size:13.50px;line-height:20px;color:#333;white-space:pre;font-weight:bold;left:1506.0px;transform:scaleX(0.9020);transform-origin:0 50%;">Last Name</div>
<svg style="position:absolute;left:1623.2px;top:700.1px;" width="3" height="4" viewBox="0 0 3 4" fill="none"><path d="M0 0.700h2.800M0 2.900h2.800" stroke="#3f8cab" stroke-width="0.900"/></svg>
<div style="position:absolute;left:1626px;top:695.7px;font-size:9.5px;line-height:12px;color:#3f8cab;letter-spacing:0.020px;font-weight:normal;-webkit-text-stroke:0.150px #3f8cab;">Abc</div>
<div style="position:absolute;top:709px;font-size:10.80px;line-height:20px;color:#707070;white-space:pre;left:1619.0px;transform:scaleX(0.9700);transform-origin:0 50%;">Calculation</div>
<div style="position:absolute;top:733px;font-size:13.50px;line-height:20px;color:#333;white-space:pre;font-weight:bold;left:1619.0px;transform:scaleX(0.9020);transform-origin:0 50%;">First Name</div>
<svg style="position:absolute;left:1739px;top:695.8px;" width="11.3" height="11.3" viewBox="0 0 12 12" fill="none"><circle cx="6" cy="6" r="5.300" stroke="#3f8cab" stroke-width="1"/><ellipse cx="6" cy="6" rx="2.400" ry="5.300" stroke="#3f8cab" stroke-width="0.900"/><path d="M0.700 6h10.600M1.500 3.300h9M1.500 8.700h9" stroke="#3f8cab" stroke-width="0.900"/></svg>
<div style="position:absolute;top:709px;font-size:10.80px;line-height:20px;color:#707070;white-space:pre;left:1733.0px;transform:scaleX(0.9700);transform-origin:0 50%;">Orders</div>
<div style="position:absolute;top:733px;font-size:13.50px;line-height:20px;color:#333;white-space:pre;font-weight:bold;left:1733.0px;transform:scaleX(0.9020);transform-origin:0 50%;">City</div>
<svg style="position:absolute;left:1862px;top:695.8px;" width="11.3" height="11.3" viewBox="0 0 12 12" fill="none"><circle cx="6" cy="6" r="5.300" stroke="#3f8cab" stroke-width="1"/><ellipse cx="6" cy="6" rx="2.400" ry="5.300" stroke="#3f8cab" stroke-width="0.900"/><path d="M0.700 6h10.600M1.500 3.300h9M1.500 8.700h9" stroke="#3f8cab" stroke-width="0.900"/></svg>
<div style="position:absolute;top:709px;font-size:10.80px;line-height:20px;color:#707070;white-space:pre;left:1856.0px;transform:scaleX(0.9700);transform-origin:0 50%;">Orders</div>
<div style="position:absolute;top:733px;font-size:13.50px;line-height:20px;color:#333;white-space:pre;font-weight:bold;left:1856.0px;transform:scaleX(0.9020);transform-origin:0 50%;">Country</div>
<svg style="position:absolute;left:1965px;top:695.8px;" width="11.3" height="11.3" viewBox="0 0 12 12" fill="none"><circle cx="6" cy="6" r="5.300" stroke="#3f8cab" stroke-width="1"/><ellipse cx="6" cy="6" rx="2.400" ry="5.300" stroke="#3f8cab" stroke-width="0.900"/><path d="M0.700 6h10.600M1.500 3.300h9M1.500 8.700h9" stroke="#3f8cab" stroke-width="0.900"/></svg>
<div style="position:absolute;top:709px;font-size:10.80px;line-height:20px;color:#707070;white-space:pre;left:1959.0px;transform:scaleX(0.9700);transform-origin:0 50%;">Orders</div>
<div style="position:absolute;top:733px;font-size:13.50px;line-height:20px;color:#333;white-space:pre;font-weight:bold;left:1959.0px;transform:scaleX(0.9020);transform-origin:0 50%;">Postal Code</div>
<svg style="position:absolute;left:2085px;top:695.8px;" width="11.3" height="11.3" viewBox="0 0 12 12" fill="none"><circle cx="6" cy="6" r="5.300" stroke="#3f8cab" stroke-width="1"/><ellipse cx="6" cy="6" rx="2.400" ry="5.300" stroke="#3f8cab" stroke-width="0.900"/><path d="M0.700 6h10.600M1.500 3.300h9M1.500 8.700h9" stroke="#3f8cab" stroke-width="0.900"/></svg>
<div style="position:absolute;top:709px;font-size:10.80px;line-height:20px;color:#707070;white-space:pre;left:2079.0px;transform:scaleX(0.9700);transform-origin:0 50%;">Orders</div>
<div style="position:absolute;top:733px;font-size:13.50px;line-height:20px;color:#333;white-space:pre;font-weight:bold;left:2079.0px;transform:scaleX(0.9020);transform-origin:0 50%;">Country Code</div>
<svg style="position:absolute;left:2216px;top:695.5px;" width="11" height="11" viewBox="0 0 11 11" fill="none"><path d="M3.600 0.500v10M7.400 0.500v10M0.500 3.600h10M0.500 7.400h10" stroke="#10a878" stroke-width="1.150"/></svg>
<div style="position:absolute;top:709px;font-size:10.80px;line-height:20px;color:#707070;white-space:pre;left:2210.0px;transform:scaleX(0.9700);transform-origin:0 50%;">Orders</div>
<div style="position:absolute;top:733px;font-size:13.50px;line-height:20px;color:#333;white-space:pre;font-weight:bold;left:2210.0px;transform:scaleX(0.9020);transform-origin:0 50%;">Cost</div>
<svg style="position:absolute;left:2294px;top:695.5px;" width="11" height="11" viewBox="0 0 11 11" fill="none"><path d="M3.600 0.500v10M7.400 0.500v10M0.500 3.600h10M0.500 7.400h10" stroke="#10a878" stroke-width="1.150"/></svg>
<div style="position:absolute;top:709px;font-size:10.80px;line-height:20px;color:#707070;white-space:pre;left:2288.0px;transform:scaleX(0.9700);transform-origin:0 50%;">Orders</div>
<div style="position:absolute;top:733px;font-size:13.50px;line-height:20px;color:#333;white-space:pre;font-weight:bold;left:2288.0px;transform:scaleX(0.9020);transform-origin:0 50%;">Sales</div>
<svg style="position:absolute;left:2375.7px;top:699.5px;" width="3" height="4" viewBox="0 0 3 4" fill="none"><path d="M0 0.700h2.800M0 2.900h2.800" stroke="#10a878" stroke-width="0.900"/></svg>
<svg style="position:absolute;left:2380px;top:695.5px;" width="11" height="11" viewBox="0 0 11 11" fill="none"><path d="M3.600 0.500v10M7.400 0.500v10M0.500 3.600h10M0.500 7.400h10" stroke="#10a878" stroke-width="1.150"/></svg>
<div style="position:absolute;top:709px;font-size:10.80px;line-height:20px;color:#707070;white-space:pre;left:2370.0px;transform:scaleX(0.9700);transform-origin:0 50%;">Calculation</div>
<div style="position:absolute;top:733px;font-size:13.50px;line-height:20px;color:#333;white-space:pre;font-weight:bold;left:2370.0px;transform:scaleX(0.9020);transform-origin:0 50%;">Profit</div>
<svg style="position:absolute;left:2459px;top:695.5px;" width="11" height="11" viewBox="0 0 11 11" fill="none"><path d="M3.600 0.500v10M7.400 0.500v10M0.500 3.600h10M0.500 7.400h10" stroke="#10a878" stroke-width="1.150"/></svg>
<div style="position:absolute;top:709px;font-size:10.80px;line-height:20px;color:#707070;white-space:pre;left:2453.0px;transform:scaleX(0.9700);transform-origin:0 50%;">Orders</div>
<div style="position:absolute;top:733px;font-size:13.50px;line-height:20px;color:#333;white-space:pre;font-weight:bold;left:2453.0px;transform:scaleX(0.9020);transform-origin:0 50%;">Quantity</div>
<div style="position:absolute;left:0;top:760px;width:2560px;height:612px;overflow:hidden">
<div style="position:absolute;top:4px;font-size:14.00px;line-height:20px;color:#333;white-space:pre;-webkit-text-stroke:0.16px #333;right:1692.5px;text-align:right;transform:scaleX(0.9030);transform-origin:100% 50%;">137</div>
<div style="position:absolute;top:4px;font-size:14.00px;line-height:20px;color:#333;white-space:pre;-webkit-text-stroke:0.16px #333;left:893.0px;transform:scaleX(0.9030);transform-origin:0 50%;">69-607-3610</div>
<div style="position:absolute;top:4px;font-size:14.00px;line-height:20px;color:#333;white-space:pre;-webkit-text-stroke:0.16px #333;left:995.0px;transform:scaleX(0.9030);transform-origin:0 50%;">21<span style="display:inline-block;margin:0 2.05px;transform:scale(1.45,1.1)">/</span>08<span style="display:inline-block;margin:0 2.05px;transform:scale(1.45,1.1)">/</span>2022</div>
<div style="position:absolute;top:4px;font-size:14.00px;line-height:20px;color:#333;white-space:pre;-webkit-text-stroke:0.16px #333;left:1109.0px;transform:scaleX(0.9030);transform-origin:0 50%;">30<span style="display:inline-block;margin:0 2.05px;transform:scale(1.45,1.1)">/</span>03<span style="display:inline-block;margin:0 2.05px;transform:scale(1.45,1.1)">/</span>2021</div>
<div style="position:absolute;top:4px;font-size:14.00px;line-height:20px;color:#333;white-space:pre;-webkit-text-stroke:0.16px #333;left:1237.0px;transform:scaleX(0.9030);transform-origin:0 50%;">37-013-0292</div>
<div style="position:absolute;top:4px;font-size:14.00px;line-height:20px;color:#333;white-space:pre;-webkit-text-stroke:0.16px #333;left:1361.0px;transform:scaleX(0.9030);transform-origin:0 50%;">Sterne Salterne</div>
<div style="position:absolute;top:4px;font-size:14.00px;line-height:20px;color:#333;white-space:pre;-webkit-text-stroke:0.16px #333;left:1506.0px;transform:scaleX(0.9030);transform-origin:0 50%;">Salterne</div>
<div style="position:absolute;top:4px;font-size:14.00px;line-height:20px;color:#333;white-space:pre;-webkit-text-stroke:0.16px #333;left:1619.0px;transform:scaleX(0.9030);transform-origin:0 50%;">Sterne</div>
<div style="position:absolute;top:4px;font-size:14.00px;line-height:20px;color:#333;white-space:pre;-webkit-text-stroke:0.16px #333;left:1733.0px;transform:scaleX(0.9030);transform-origin:0 50%;">Shawnee Mission</div>
<div style="position:absolute;top:4px;font-size:14.00px;line-height:20px;color:#333;white-space:pre;-webkit-text-stroke:0.16px #333;left:1856.0px;transform:scaleX(0.9030);transform-origin:0 50%;">United States</div>
<div style="position:absolute;top:4px;font-size:14.00px;line-height:20px;color:#333;white-space:pre;-webkit-text-stroke:0.16px #333;left:1959.0px;transform:scaleX(0.9030);transform-origin:0 50%;">993-0039</div>
<div style="position:absolute;top:4px;font-size:14.00px;line-height:20px;color:#333;white-space:pre;-webkit-text-stroke:0.16px #333;left:2079.0px;transform:scaleX(0.9030);transform-origin:0 50%;">US</div>
<div style="position:absolute;top:4px;font-size:14.00px;line-height:20px;color:#333;white-space:pre;-webkit-text-stroke:0.16px #333;right:297.5px;text-align:right;transform:scaleX(0.9030);transform-origin:100% 50%;">190.000</div>
<div style="position:absolute;top:4px;font-size:14.00px;line-height:20px;color:#333;white-space:pre;-webkit-text-stroke:0.16px #333;right:215.5px;text-align:right;transform:scaleX(0.9030);transform-origin:100% 50%;">285.000</div>
<div style="position:absolute;top:4px;font-size:14.00px;line-height:20px;color:#333;white-space:pre;-webkit-text-stroke:0.16px #333;right:132.5px;text-align:right;transform:scaleX(0.9030);transform-origin:100% 50%;">95.000</div>
<div style="position:absolute;top:4px;font-size:14.00px;line-height:20px;color:#333;white-space:pre;-webkit-text-stroke:0.16px #333;right:31.5px;text-align:right;transform:scaleX(0.9030);transform-origin:100% 50%;">2</div>
<div style="position:absolute;top:34px;font-size:14.00px;line-height:20px;color:#333;white-space:pre;-webkit-text-stroke:0.16px #333;right:1692.5px;text-align:right;transform:scaleX(0.9030);transform-origin:100% 50%;">141</div>
<div style="position:absolute;top:34px;font-size:14.00px;line-height:20px;color:#333;white-space:pre;-webkit-text-stroke:0.16px #333;left:893.0px;transform:scaleX(0.9030);transform-origin:0 50%;">56-076-6137</div>
<div style="position:absolute;top:34px;font-size:14.00px;line-height:20px;color:#333;white-space:pre;-webkit-text-stroke:0.16px #333;left:995.0px;transform:scaleX(0.9030);transform-origin:0 50%;">13<span style="display:inline-block;margin:0 2.05px;transform:scale(1.45,1.1)">/</span>08<span style="display:inline-block;margin:0 2.05px;transform:scale(1.45,1.1)">/</span>2020</div>
<div style="position:absolute;top:34px;font-size:14.00px;line-height:20px;color:#333;white-space:pre;-webkit-text-stroke:0.16px #333;left:1109.0px;transform:scaleX(0.9030);transform-origin:0 50%;">07<span style="display:inline-block;margin:0 2.05px;transform:scale(1.45,1.1)">/</span>10<span style="display:inline-block;margin:0 2.05px;transform:scale(1.45,1.1)">/</span>2021</div>
<div style="position:absolute;top:34px;font-size:14.00px;line-height:20px;color:#333;white-space:pre;-webkit-text-stroke:0.16px #333;left:1237.0px;transform:scaleX(0.9030);transform-origin:0 50%;">46-957-2549</div>
<div style="position:absolute;top:34px;font-size:14.00px;line-height:20px;color:#333;white-space:pre;-webkit-text-stroke:0.16px #333;left:1361.0px;transform:scaleX(0.9030);transform-origin:0 50%;">Mady McMennum</div>
<div style="position:absolute;top:34px;font-size:14.00px;line-height:20px;color:#333;white-space:pre;-webkit-text-stroke:0.16px #333;left:1506.0px;transform:scaleX(0.9030);transform-origin:0 50%;">McMennum</div>
<div style="position:absolute;top:34px;font-size:14.00px;line-height:20px;color:#333;white-space:pre;-webkit-text-stroke:0.16px #333;left:1619.0px;transform:scaleX(0.9030);transform-origin:0 50%;">Mady</div>
<div style="position:absolute;top:34px;font-size:14.00px;line-height:20px;color:#333;white-space:pre;-webkit-text-stroke:0.16px #333;left:1733.0px;transform:scaleX(0.9030);transform-origin:0 50%;">Provo</div>
<div style="position:absolute;top:34px;font-size:14.00px;line-height:20px;color:#333;white-space:pre;-webkit-text-stroke:0.16px #333;left:1856.0px;transform:scaleX(0.9030);transform-origin:0 50%;">United States</div>
<div style="position:absolute;top:34px;font-size:14.00px;line-height:20px;color:#333;white-space:pre;-webkit-text-stroke:0.16px #333;left:1959.0px;transform:scaleX(0.9030);transform-origin:0 50%;">359 01</div>
<div style="position:absolute;top:34px;font-size:14.00px;line-height:20px;color:#333;white-space:pre;-webkit-text-stroke:0.16px #333;left:2079.0px;transform:scaleX(0.9030);transform-origin:0 50%;">US</div>
<div style="position:absolute;top:34px;font-size:14.00px;line-height:20px;color:#333;white-space:pre;-webkit-text-stroke:0.16px #333;right:297.5px;text-align:right;transform:scaleX(0.9030);transform-origin:100% 50%;">144.090</div>
<div style="position:absolute;top:34px;font-size:14.00px;line-height:20px;color:#333;white-space:pre;-webkit-text-stroke:0.16px #333;right:215.5px;text-align:right;transform:scaleX(0.9030);transform-origin:100% 50%;">216.135</div>
<div style="position:absolute;top:34px;font-size:14.00px;line-height:20px;color:#333;white-space:pre;-webkit-text-stroke:0.16px #333;right:132.5px;text-align:right;transform:scaleX(0.9030);transform-origin:100% 50%;">72.045</div>
<div style="position:absolute;top:34px;font-size:14.00px;line-height:20px;color:#333;white-space:pre;-webkit-text-stroke:0.16px #333;right:31.5px;text-align:right;transform:scaleX(0.9030);transform-origin:100% 50%;">2</div>
<div style="position:absolute;top:64px;font-size:14.00px;line-height:20px;color:#333;white-space:pre;-webkit-text-stroke:0.16px #333;right:1692.5px;text-align:right;transform:scaleX(0.9030);transform-origin:100% 50%;">195</div>
<div style="position:absolute;top:64px;font-size:14.00px;line-height:20px;color:#333;white-space:pre;-webkit-text-stroke:0.16px #333;left:893.0px;transform:scaleX(0.9030);transform-origin:0 50%;">06-887-6332</div>
<div style="position:absolute;top:64px;font-size:14.00px;line-height:20px;color:#333;white-space:pre;-webkit-text-stroke:0.16px #333;left:995.0px;transform:scaleX(0.9030);transform-origin:0 50%;">27<span style="display:inline-block;margin:0 2.05px;transform:scale(1.45,1.1)">/</span>02<span style="display:inline-block;margin:0 2.05px;transform:scale(1.45,1.1)">/</span>2022</div>
<div style="position:absolute;top:64px;font-size:14.00px;line-height:20px;color:#333;white-space:pre;-webkit-text-stroke:0.16px #333;left:1109.0px;transform:scaleX(0.9030);transform-origin:0 50%;">19<span style="display:inline-block;margin:0 2.05px;transform:scale(1.45,1.1)">/</span>12<span style="display:inline-block;margin:0 2.05px;transform:scale(1.45,1.1)">/</span>2019</div>
<div style="position:absolute;top:64px;font-size:14.00px;line-height:20px;color:#333;white-space:pre;-webkit-text-stroke:0.16px #333;left:1237.0px;transform:scaleX(0.9030);transform-origin:0 50%;">52-934-7220</div>
<div style="position:absolute;top:64px;font-size:14.00px;line-height:20px;color:#333;white-space:pre;-webkit-text-stroke:0.16px #333;left:1361.0px;transform:scaleX(0.9030);transform-origin:0 50%;">Merwin Pikhno</div>
<div style="position:absolute;top:64px;font-size:14.00px;line-height:20px;color:#333;white-space:pre;-webkit-text-stroke:0.16px #333;left:1506.0px;transform:scaleX(0.9030);transform-origin:0 50%;">Pikhno</div>
<div style="position:absolute;top:64px;font-size:14.00px;line-height:20px;color:#333;white-space:pre;-webkit-text-stroke:0.16px #333;left:1619.0px;transform:scaleX(0.9030);transform-origin:0 50%;">Merwin</div>
<div style="position:absolute;top:64px;font-size:14.00px;line-height:20px;color:#333;white-space:pre;-webkit-text-stroke:0.16px #333;left:1733.0px;transform:scaleX(0.9030);transform-origin:0 50%;">Reno</div>
<div style="position:absolute;top:64px;font-size:14.00px;line-height:20px;color:#333;white-space:pre;-webkit-text-stroke:0.16px #333;left:1856.0px;transform:scaleX(0.9030);transform-origin:0 50%;">United States</div>
<div style="position:absolute;top:64px;font-size:14.00px;line-height:20px;color:#333;white-space:pre;-webkit-text-stroke:0.16px #333;left:1959.0px;transform:scaleX(0.9030);transform-origin:0 50%;">3810-771</div>
<div style="position:absolute;top:64px;font-size:14.00px;line-height:20px;color:#333;white-space:pre;-webkit-text-stroke:0.16px #333;left:2079.0px;transform:scaleX(0.9030);transform-origin:0 50%;">US</div>
<div style="position:absolute;top:64px;font-size:14.00px;line-height:20px;color:#333;white-space:pre;-webkit-text-stroke:0.16px #333;right:297.5px;text-align:right;transform:scaleX(0.9030);transform-origin:100% 50%;">125.000</div>
<div style="position:absolute;top:64px;font-size:14.00px;line-height:20px;color:#333;white-space:pre;-webkit-text-stroke:0.16px #333;right:215.5px;text-align:right;transform:scaleX(0.9030);transform-origin:100% 50%;">187.500</div>
<div style="position:absolute;top:64px;font-size:14.00px;line-height:20px;color:#333;white-space:pre;-webkit-text-stroke:0.16px #333;right:132.5px;text-align:right;transform:scaleX(0.9030);transform-origin:100% 50%;">62.500</div>
<div style="position:absolute;top:64px;font-size:14.00px;line-height:20px;color:#333;white-space:pre;-webkit-text-stroke:0.16px #333;right:31.5px;text-align:right;transform:scaleX(0.9030);transform-origin:100% 50%;">3</div>
<div style="position:absolute;top:94px;font-size:14.00px;line-height:20px;color:#333;white-space:pre;-webkit-text-stroke:0.16px #333;right:1692.5px;text-align:right;transform:scaleX(0.9030);transform-origin:100% 50%;">255</div>
<div style="position:absolute;top:94px;font-size:14.00px;line-height:20px;color:#333;white-space:pre;-webkit-text-stroke:0.16px #333;left:893.0px;transform:scaleX(0.9030);transform-origin:0 50%;">04-904-4552</div>
<div style="position:absolute;top:94px;font-size:14.00px;line-height:20px;color:#333;white-space:pre;-webkit-text-stroke:0.16px #333;left:995.0px;transform:scaleX(0.9030);transform-origin:0 50%;">14<span style="display:inline-block;margin:0 2.05px;transform:scale(1.45,1.1)">/</span>07<span style="display:inline-block;margin:0 2.05px;transform:scale(1.45,1.1)">/</span>2021</div>
<div style="position:absolute;top:94px;font-size:14.00px;line-height:20px;color:#333;white-space:pre;-webkit-text-stroke:0.16px #333;left:1109.0px;transform:scaleX(0.9030);transform-origin:0 50%;">23<span style="display:inline-block;margin:0 2.05px;transform:scale(1.45,1.1)">/</span>10<span style="display:inline-block;margin:0 2.05px;transform:scale(1.45,1.1)">/</span>2022</div>
<div style="position:absolute;top:94px;font-size:14.00px;line-height:20px;color:#333;white-space:pre;-webkit-text-stroke:0.16px #333;left:1237.0px;transform:scaleX(0.9030);transform-origin:0 50%;">93-077-9628</div>
<div style="position:absolute;top:94px;font-size:14.00px;line-height:20px;color:#333;white-space:pre;-webkit-text-stroke:0.16px #333;left:1361.0px;transform:scaleX(0.9030);transform-origin:0 50%;">Aime Ferry</div>
<div style="position:absolute;top:94px;font-size:14.00px;line-height:20px;color:#333;white-space:pre;-webkit-text-stroke:0.16px #333;left:1506.0px;transform:scaleX(0.9030);transform-origin:0 50%;">Ferry</div>
<div style="position:absolute;top:94px;font-size:14.00px;line-height:20px;color:#333;white-space:pre;-webkit-text-stroke:0.16px #333;left:1619.0px;transform:scaleX(0.9030);transform-origin:0 50%;">Aime</div>
<div style="position:absolute;top:94px;font-size:14.00px;line-height:20px;color:#333;white-space:pre;-webkit-text-stroke:0.16px #333;left:1733.0px;transform:scaleX(0.9030);transform-origin:0 50%;">Sacramento</div>
<div style="position:absolute;top:94px;font-size:14.00px;line-height:20px;color:#333;white-space:pre;-webkit-text-stroke:0.16px #333;left:1856.0px;transform:scaleX(0.9030);transform-origin:0 50%;">United States</div>
<div style="position:absolute;top:94px;font-size:14.00px;line-height:20px;color:#333;white-space:pre;-webkit-text-stroke:0.16px #333;left:1959.0px;transform:scaleX(0.9030);transform-origin:0 50%;">-6.44962e+06</div>
<div style="position:absolute;top:94px;font-size:14.00px;line-height:20px;color:#333;white-space:pre;-webkit-text-stroke:0.16px #333;left:2079.0px;transform:scaleX(0.9030);transform-origin:0 50%;">US</div>
<div style="position:absolute;top:94px;font-size:14.00px;line-height:20px;color:#333;white-space:pre;-webkit-text-stroke:0.16px #333;right:297.5px;text-align:right;transform:scaleX(0.9030);transform-origin:100% 50%;">91.840</div>
<div style="position:absolute;top:94px;font-size:14.00px;line-height:20px;color:#333;white-space:pre;-webkit-text-stroke:0.16px #333;right:215.5px;text-align:right;transform:scaleX(0.9030);transform-origin:100% 50%;">137.760</div>
<div style="position:absolute;top:94px;font-size:14.00px;line-height:20px;color:#333;white-space:pre;-webkit-text-stroke:0.16px #333;right:132.5px;text-align:right;transform:scaleX(0.9030);transform-origin:100% 50%;">45.920</div>
<div style="position:absolute;top:94px;font-size:14.00px;line-height:20px;color:#333;white-space:pre;-webkit-text-stroke:0.16px #333;right:31.5px;text-align:right;transform:scaleX(0.9030);transform-origin:100% 50%;">2</div>
<div style="position:absolute;top:124px;font-size:14.00px;line-height:20px;color:#333;white-space:pre;-webkit-text-stroke:0.16px #333;right:1692.5px;text-align:right;transform:scaleX(0.9030);transform-origin:100% 50%;">262</div>
<div style="position:absolute;top:124px;font-size:14.00px;line-height:20px;color:#333;white-space:pre;-webkit-text-stroke:0.16px #333;left:893.0px;transform:scaleX(0.9030);transform-origin:0 50%;">60-081-1759</div>
<div style="position:absolute;top:124px;font-size:14.00px;line-height:20px;color:#333;white-space:pre;-webkit-text-stroke:0.16px #333;left:995.0px;transform:scaleX(0.9030);transform-origin:0 50%;">27<span style="display:inline-block;margin:0 2.05px;transform:scale(1.45,1.1)">/</span>07<span style="display:inline-block;margin:0 2.05px;transform:scale(1.45,1.1)">/</span>2019</div>
<div style="position:absolute;top:124px;font-size:14.00px;line-height:20px;color:#333;white-space:pre;-webkit-text-stroke:0.16px #333;left:1109.0px;transform:scaleX(0.9030);transform-origin:0 50%;">20<span style="display:inline-block;margin:0 2.05px;transform:scale(1.45,1.1)">/</span>04<span style="display:inline-block;margin:0 2.05px;transform:scale(1.45,1.1)">/</span>2022</div>
<div style="position:absolute;top:124px;font-size:14.00px;line-height:20px;color:#333;white-space:pre;-webkit-text-stroke:0.16px #333;left:1237.0px;transform:scaleX(0.9030);transform-origin:0 50%;">81-155-1642</div>
<div style="position:absolute;top:124px;font-size:14.00px;line-height:20px;color:#333;white-space:pre;-webkit-text-stroke:0.16px #333;left:1361.0px;transform:scaleX(0.9030);transform-origin:0 50%;">Merlina Lermit</div>
<div style="position:absolute;top:124px;font-size:14.00px;line-height:20px;color:#333;white-space:pre;-webkit-text-stroke:0.16px #333;left:1506.0px;transform:scaleX(0.9030);transform-origin:0 50%;">Lermit</div>
<div style="position:absolute;top:124px;font-size:14.00px;line-height:20px;color:#333;white-space:pre;-webkit-text-stroke:0.16px #333;left:1619.0px;transform:scaleX(0.9030);transform-origin:0 50%;">Merlina</div>
<div style="position:absolute;top:124px;font-size:14.00px;line-height:20px;color:#333;white-space:pre;-webkit-text-stroke:0.16px #333;left:1733.0px;transform:scaleX(0.9030);transform-origin:0 50%;">Allentown</div>
<div style="position:absolute;top:124px;font-size:14.00px;line-height:20px;color:#333;white-space:pre;-webkit-text-stroke:0.16px #333;left:1856.0px;transform:scaleX(0.9030);transform-origin:0 50%;">United States</div>
<div style="position:absolute;top:124px;font-size:14.00px;line-height:20px;color:#333;white-space:pre;-webkit-text-stroke:0.16px #333;left:1959.0px;transform:scaleX(0.9030);transform-origin:0 50%;">17062310</div>
<div style="position:absolute;top:124px;font-size:14.00px;line-height:20px;color:#333;white-space:pre;-webkit-text-stroke:0.16px #333;left:2079.0px;transform:scaleX(0.9030);transform-origin:0 50%;">US</div>
<div style="position:absolute;top:124px;font-size:14.00px;line-height:20px;color:#333;white-space:pre;-webkit-text-stroke:0.16px #333;right:297.5px;text-align:right;transform:scaleX(0.9030);transform-origin:100% 50%;">235.000</div>
<div style="position:absolute;top:124px;font-size:14.00px;line-height:20px;color:#333;white-space:pre;-webkit-text-stroke:0.16px #333;right:215.5px;text-align:right;transform:scaleX(0.9030);transform-origin:100% 50%;">352.500</div>
<div style="position:absolute;top:124px;font-size:14.00px;line-height:20px;color:#333;white-space:pre;-webkit-text-stroke:0.16px #333;right:132.5px;text-align:right;transform:scaleX(0.9030);transform-origin:100% 50%;">117.500</div>
<div style="position:absolute;top:124px;font-size:14.00px;line-height:20px;color:#333;white-space:pre;-webkit-text-stroke:0.16px #333;right:31.5px;text-align:right;transform:scaleX(0.9030);transform-origin:100% 50%;">1</div>
<div style="position:absolute;top:154px;font-size:14.00px;line-height:20px;color:#333;white-space:pre;-webkit-text-stroke:0.16px #333;right:1692.5px;text-align:right;transform:scaleX(0.9030);transform-origin:100% 50%;">348</div>
<div style="position:absolute;top:154px;font-size:14.00px;line-height:20px;color:#333;white-space:pre;-webkit-text-stroke:0.16px #333;left:893.0px;transform:scaleX(0.9030);transform-origin:0 50%;">12-718-1501</div>
<div style="position:absolute;top:154px;font-size:14.00px;line-height:20px;color:#333;white-space:pre;-webkit-text-stroke:0.16px #333;left:995.0px;transform:scaleX(0.9030);transform-origin:0 50%;">05<span style="display:inline-block;margin:0 2.05px;transform:scale(1.45,1.1)">/</span>06<span style="display:inline-block;margin:0 2.05px;transform:scale(1.45,1.1)">/</span>2020</div>
<div style="position:absolute;top:154px;font-size:14.00px;line-height:20px;color:#333;white-space:pre;-webkit-text-stroke:0.16px #333;left:1109.0px;transform:scaleX(0.9030);transform-origin:0 50%;">22<span style="display:inline-block;margin:0 2.05px;transform:scale(1.45,1.1)">/</span>10<span style="display:inline-block;margin:0 2.05px;transform:scale(1.45,1.1)">/</span>2019</div>
<div style="position:absolute;top:154px;font-size:14.00px;line-height:20px;color:#333;white-space:pre;-webkit-text-stroke:0.16px #333;left:1237.0px;transform:scaleX(0.9030);transform-origin:0 50%;">44-371-9315</div>
<div style="position:absolute;top:154px;font-size:14.00px;line-height:20px;color:#333;white-space:pre;-webkit-text-stroke:0.16px #333;left:1361.0px;transform:scaleX(0.9030);transform-origin:0 50%;">Schuyler Walewski</div>
<div style="position:absolute;top:154px;font-size:14.00px;line-height:20px;color:#333;white-space:pre;-webkit-text-stroke:0.16px #333;left:1506.0px;transform:scaleX(0.9030);transform-origin:0 50%;">Walewski</div>
<div style="position:absolute;top:154px;font-size:14.00px;line-height:20px;color:#333;white-space:pre;-webkit-text-stroke:0.16px #333;left:1619.0px;transform:scaleX(0.9030);transform-origin:0 50%;">Schuyler</div>
<div style="position:absolute;top:154px;font-size:14.00px;line-height:20px;color:#333;white-space:pre;-webkit-text-stroke:0.16px #333;left:1733.0px;transform:scaleX(0.9030);transform-origin:0 50%;">Inglewood</div>
<div style="position:absolute;top:154px;font-size:14.00px;line-height:20px;color:#333;white-space:pre;-webkit-text-stroke:0.16px #333;left:1856.0px;transform:scaleX(0.9030);transform-origin:0 50%;">United States</div>
<div style="position:absolute;top:154px;font-size:14.00px;line-height:20px;color:#333;white-space:pre;-webkit-text-stroke:0.16px #333;left:1959.0px;transform:scaleX(0.9030);transform-origin:0 50%;">3810-780</div>
<div style="position:absolute;top:154px;font-size:14.00px;line-height:20px;color:#333;white-space:pre;-webkit-text-stroke:0.16px #333;left:2079.0px;transform:scaleX(0.9030);transform-origin:0 50%;">US</div>
<div style="position:absolute;top:154px;font-size:14.00px;line-height:20px;color:#333;white-space:pre;-webkit-text-stroke:0.16px #333;right:297.5px;text-align:right;transform:scaleX(0.9030);transform-origin:100% 50%;">119.800</div>
<div style="position:absolute;top:154px;font-size:14.00px;line-height:20px;color:#333;white-space:pre;-webkit-text-stroke:0.16px #333;right:215.5px;text-align:right;transform:scaleX(0.9030);transform-origin:100% 50%;">179.700</div>
<div style="position:absolute;top:154px;font-size:14.00px;line-height:20px;color:#333;white-space:pre;-webkit-text-stroke:0.16px #333;right:132.5px;text-align:right;transform:scaleX(0.9030);transform-origin:100% 50%;">59.900</div>
<div style="position:absolute;top:154px;font-size:14.00px;line-height:20px;color:#333;white-space:pre;-webkit-text-stroke:0.16px #333;right:31.5px;text-align:right;transform:scaleX(0.9030);transform-origin:100% 50%;">3</div>
<div style="position:absolute;top:184px;font-size:14.00px;line-height:20px;color:#333;white-space:pre;-webkit-text-stroke:0.16px #333;right:1692.5px;text-align:right;transform:scaleX(0.9030);transform-origin:100% 50%;">349</div>
<div style="position:absolute;top:184px;font-size:14.00px;line-height:20px;color:#333;white-space:pre;-webkit-text-stroke:0.16px #333;left:893.0px;transform:scaleX(0.9030);transform-origin:0 50%;">99-748-0471</div>
<div style="position:absolute;top:184px;font-size:14.00px;line-height:20px;color:#333;white-space:pre;-webkit-text-stroke:0.16px #333;left:995.0px;transform:scaleX(0.9030);transform-origin:0 50%;">05<span style="display:inline-block;margin:0 2.05px;transform:scale(1.45,1.1)">/</span>11<span style="display:inline-block;margin:0 2.05px;transform:scale(1.45,1.1)">/</span>2019</div>
<div style="position:absolute;top:184px;font-size:14.00px;line-height:20px;color:#333;white-space:pre;-webkit-text-stroke:0.16px #333;left:1109.0px;transform:scaleX(0.9030);transform-origin:0 50%;">04<span style="display:inline-block;margin:0 2.05px;transform:scale(1.45,1.1)">/</span>03<span style="display:inline-block;margin:0 2.05px;transform:scale(1.45,1.1)">/</span>2021</div>
<div style="position:absolute;top:184px;font-size:14.00px;line-height:20px;color:#333;white-space:pre;-webkit-text-stroke:0.16px #333;left:1237.0px;transform:scaleX(0.9030);transform-origin:0 50%;">16-794-2589</div>
<div style="position:absolute;top:184px;font-size:14.00px;line-height:20px;color:#333;white-space:pre;-webkit-text-stroke:0.16px #333;left:1361.0px;transform:scaleX(0.9030);transform-origin:0 50%;">Ariadne Copeland</div>
<div style="position:absolute;top:184px;font-size:14.00px;line-height:20px;color:#333;white-space:pre;-webkit-text-stroke:0.16px #333;left:1506.0px;transform:scaleX(0.9030);transform-origin:0 50%;">Copeland</div>
<div style="position:absolute;top:184px;font-size:14.00px;line-height:20px;color:#333;white-space:pre;-webkit-text-stroke:0.16px #333;left:1619.0px;transform:scaleX(0.9030);transform-origin:0 50%;">Ariadne</div>
<div style="position:absolute;top:184px;font-size:14.00px;line-height:20px;color:#333;white-space:pre;-webkit-text-stroke:0.16px #333;left:1733.0px;transform:scaleX(0.9030);transform-origin:0 50%;">Phoenix</div>
<div style="position:absolute;top:184px;font-size:14.00px;line-height:20px;color:#333;white-space:pre;-webkit-text-stroke:0.16px #333;left:1856.0px;transform:scaleX(0.9030);transform-origin:0 50%;">United States</div>
<div style="position:absolute;top:184px;font-size:14.00px;line-height:20px;color:#333;white-space:pre;-webkit-text-stroke:0.16px #333;left:1959.0px;transform:scaleX(0.9030);transform-origin:0 50%;">692789</div>
<div style="position:absolute;top:184px;font-size:14.00px;line-height:20px;color:#333;white-space:pre;-webkit-text-stroke:0.16px #333;left:2079.0px;transform:scaleX(0.9030);transform-origin:0 50%;">US</div>
<div style="position:absolute;top:184px;font-size:14.00px;line-height:20px;color:#333;white-space:pre;-webkit-text-stroke:0.16px #333;right:297.5px;text-align:right;transform:scaleX(0.9030);transform-origin:100% 50%;">125.000</div>
<div style="position:absolute;top:184px;font-size:14.00px;line-height:20px;color:#333;white-space:pre;-webkit-text-stroke:0.16px #333;right:215.5px;text-align:right;transform:scaleX(0.9030);transform-origin:100% 50%;">187.500</div>
<div style="position:absolute;top:184px;font-size:14.00px;line-height:20px;color:#333;white-space:pre;-webkit-text-stroke:0.16px #333;right:132.5px;text-align:right;transform:scaleX(0.9030);transform-origin:100% 50%;">62.500</div>
<div style="position:absolute;top:184px;font-size:14.00px;line-height:20px;color:#333;white-space:pre;-webkit-text-stroke:0.16px #333;right:31.5px;text-align:right;transform:scaleX(0.9030);transform-origin:100% 50%;">2</div>
<div style="position:absolute;top:214px;font-size:14.00px;line-height:20px;color:#333;white-space:pre;-webkit-text-stroke:0.16px #333;right:1692.5px;text-align:right;transform:scaleX(0.9030);transform-origin:100% 50%;">350</div>
<div style="position:absolute;top:214px;font-size:14.00px;line-height:20px;color:#333;white-space:pre;-webkit-text-stroke:0.16px #333;left:893.0px;transform:scaleX(0.9030);transform-origin:0 50%;">84-864-3249</div>
<div style="position:absolute;top:214px;font-size:14.00px;line-height:20px;color:#333;white-space:pre;-webkit-text-stroke:0.16px #333;left:995.0px;transform:scaleX(0.9030);transform-origin:0 50%;">18<span style="display:inline-block;margin:0 2.05px;transform:scale(1.45,1.1)">/</span>12<span style="display:inline-block;margin:0 2.05px;transform:scale(1.45,1.1)">/</span>2019</div>
<div style="position:absolute;top:214px;font-size:14.00px;line-height:20px;color:#333;white-space:pre;-webkit-text-stroke:0.16px #333;left:1109.0px;transform:scaleX(0.9030);transform-origin:0 50%;">23<span style="display:inline-block;margin:0 2.05px;transform:scale(1.45,1.1)">/</span>03<span style="display:inline-block;margin:0 2.05px;transform:scale(1.45,1.1)">/</span>2021</div>
<div style="position:absolute;top:214px;font-size:14.00px;line-height:20px;color:#333;white-space:pre;-webkit-text-stroke:0.16px #333;left:1237.0px;transform:scaleX(0.9030);transform-origin:0 50%;">75-496-8007</div>
<div style="position:absolute;top:214px;font-size:14.00px;line-height:20px;color:#333;white-space:pre;-webkit-text-stroke:0.16px #333;left:1361.0px;transform:scaleX(0.9030);transform-origin:0 50%;">Tamma Clink</div>
<div style="position:absolute;top:214px;font-size:14.00px;line-height:20px;color:#333;white-space:pre;-webkit-text-stroke:0.16px #333;left:1506.0px;transform:scaleX(0.9030);transform-origin:0 50%;">Clink</div>
<div style="position:absolute;top:214px;font-size:14.00px;line-height:20px;color:#333;white-space:pre;-webkit-text-stroke:0.16px #333;left:1619.0px;transform:scaleX(0.9030);transform-origin:0 50%;">Tamma</div>
<div style="position:absolute;top:214px;font-size:14.00px;line-height:20px;color:#333;white-space:pre;-webkit-text-stroke:0.16px #333;left:1733.0px;transform:scaleX(0.9030);transform-origin:0 50%;">Charlotte</div>
<div style="position:absolute;top:214px;font-size:14.00px;line-height:20px;color:#333;white-space:pre;-webkit-text-stroke:0.16px #333;left:1856.0px;transform:scaleX(0.9030);transform-origin:0 50%;">United States</div>
<div style="position:absolute;top:214px;font-size:14.00px;line-height:20px;color:#333;white-space:pre;-webkit-text-stroke:0.16px #333;left:1959.0px;transform:scaleX(0.9030);transform-origin:0 50%;">649-6346</div>
<div style="position:absolute;top:214px;font-size:14.00px;line-height:20px;color:#333;white-space:pre;-webkit-text-stroke:0.16px #333;left:2079.0px;transform:scaleX(0.9030);transform-origin:0 50%;">US</div>
<div style="position:absolute;top:214px;font-size:14.00px;line-height:20px;color:#333;white-space:pre;-webkit-text-stroke:0.16px #333;right:297.5px;text-align:right;transform:scaleX(0.9030);transform-origin:100% 50%;">235.000</div>
<div style="position:absolute;top:214px;font-size:14.00px;line-height:20px;color:#333;white-space:pre;-webkit-text-stroke:0.16px #333;right:215.5px;text-align:right;transform:scaleX(0.9030);transform-origin:100% 50%;">352.500</div>
<div style="position:absolute;top:214px;font-size:14.00px;line-height:20px;color:#333;white-space:pre;-webkit-text-stroke:0.16px #333;right:132.5px;text-align:right;transform:scaleX(0.9030);transform-origin:100% 50%;">117.500</div>
<div style="position:absolute;top:214px;font-size:14.00px;line-height:20px;color:#333;white-space:pre;-webkit-text-stroke:0.16px #333;right:31.5px;text-align:right;transform:scaleX(0.9030);transform-origin:100% 50%;">1</div>
<div style="position:absolute;top:244px;font-size:14.00px;line-height:20px;color:#333;white-space:pre;-webkit-text-stroke:0.16px #333;right:1692.5px;text-align:right;transform:scaleX(0.9030);transform-origin:100% 50%;">397</div>
<div style="position:absolute;top:244px;font-size:14.00px;line-height:20px;color:#333;white-space:pre;-webkit-text-stroke:0.16px #333;left:893.0px;transform:scaleX(0.9030);transform-origin:0 50%;">10-370-7784</div>
<div style="position:absolute;top:244px;font-size:14.00px;line-height:20px;color:#333;white-space:pre;-webkit-text-stroke:0.16px #333;left:995.0px;transform:scaleX(0.9030);transform-origin:0 50%;">09<span style="display:inline-block;margin:0 2.05px;transform:scale(1.45,1.1)">/</span>12<span style="display:inline-block;margin:0 2.05px;transform:scale(1.45,1.1)">/</span>2019</div>
<div style="position:absolute;top:244px;font-size:14.00px;line-height:20px;color:#333;white-space:pre;-webkit-text-stroke:0.16px #333;left:1109.0px;transform:scaleX(0.9030);transform-origin:0 50%;">15<span style="display:inline-block;margin:0 2.05px;transform:scale(1.45,1.1)">/</span>11<span style="display:inline-block;margin:0 2.05px;transform:scale(1.45,1.1)">/</span>2020</div>
<div style="position:absolute;top:244px;font-size:14.00px;line-height:20px;color:#333;white-space:pre;-webkit-text-stroke:0.16px #333;left:1237.0px;transform:scaleX(0.9030);transform-origin:0 50%;">01-169-3967</div>
<div style="position:absolute;top:244px;font-size:14.00px;line-height:20px;color:#333;white-space:pre;-webkit-text-stroke:0.16px #333;left:1361.0px;transform:scaleX(0.9030);transform-origin:0 50%;">Susette O'Neil</div>
<div style="position:absolute;top:244px;font-size:14.00px;line-height:20px;color:#333;white-space:pre;-webkit-text-stroke:0.16px #333;left:1506.0px;transform:scaleX(0.9030);transform-origin:0 50%;">O'Neil</div>
<div style="position:absolute;top:244px;font-size:14.00px;line-height:20px;color:#333;white-space:pre;-webkit-text-stroke:0.16px #333;left:1619.0px;transform:scaleX(0.9030);transform-origin:0 50%;">Susette</div>
<div style="position:absolute;top:244px;font-size:14.00px;line-height:20px;color:#333;white-space:pre;-webkit-text-stroke:0.16px #333;left:1733.0px;transform:scaleX(0.9030);transform-origin:0 50%;">Hamilton</div>
<div style="position:absolute;top:244px;font-size:14.00px;line-height:20px;color:#333;white-space:pre;-webkit-text-stroke:0.16px #333;left:1856.0px;transform:scaleX(0.9030);transform-origin:0 50%;">United States</div>
<div style="position:absolute;top:244px;font-size:14.00px;line-height:20px;color:#333;white-space:pre;-webkit-text-stroke:0.16px #333;left:1959.0px;transform:scaleX(0.9030);transform-origin:0 50%;">25272785</div>
<div style="position:absolute;top:244px;font-size:14.00px;line-height:20px;color:#333;white-space:pre;-webkit-text-stroke:0.16px #333;left:2079.0px;transform:scaleX(0.9030);transform-origin:0 50%;">US</div>
<div style="position:absolute;top:244px;font-size:14.00px;line-height:20px;color:#333;white-space:pre;-webkit-text-stroke:0.16px #333;right:297.5px;text-align:right;transform:scaleX(0.9030);transform-origin:100% 50%;">320.000</div>
<div style="position:absolute;top:244px;font-size:14.00px;line-height:20px;color:#333;white-space:pre;-webkit-text-stroke:0.16px #333;right:215.5px;text-align:right;transform:scaleX(0.9030);transform-origin:100% 50%;">480.000</div>
<div style="position:absolute;top:244px;font-size:14.00px;line-height:20px;color:#333;white-space:pre;-webkit-text-stroke:0.16px #333;right:132.5px;text-align:right;transform:scaleX(0.9030);transform-origin:100% 50%;">160.000</div>
<div style="position:absolute;top:244px;font-size:14.00px;line-height:20px;color:#333;white-space:pre;-webkit-text-stroke:0.16px #333;right:31.5px;text-align:right;transform:scaleX(0.9030);transform-origin:100% 50%;">2</div>
<div style="position:absolute;top:274px;font-size:14.00px;line-height:20px;color:#333;white-space:pre;-webkit-text-stroke:0.16px #333;right:1692.5px;text-align:right;transform:scaleX(0.9030);transform-origin:100% 50%;">521</div>
<div style="position:absolute;top:274px;font-size:14.00px;line-height:20px;color:#333;white-space:pre;-webkit-text-stroke:0.16px #333;left:893.0px;transform:scaleX(0.9030);transform-origin:0 50%;">87-435-5817</div>
<div style="position:absolute;top:274px;font-size:14.00px;line-height:20px;color:#333;white-space:pre;-webkit-text-stroke:0.16px #333;left:995.0px;transform:scaleX(0.9030);transform-origin:0 50%;">26<span style="display:inline-block;margin:0 2.05px;transform:scale(1.45,1.1)">/</span>04<span style="display:inline-block;margin:0 2.05px;transform:scale(1.45,1.1)">/</span>2021</div>
<div style="position:absolute;top:274px;font-size:14.00px;line-height:20px;color:#333;white-space:pre;-webkit-text-stroke:0.16px #333;left:1109.0px;transform:scaleX(0.9030);transform-origin:0 50%;">01<span style="display:inline-block;margin:0 2.05px;transform:scale(1.45,1.1)">/</span>03<span style="display:inline-block;margin:0 2.05px;transform:scale(1.45,1.1)">/</span>2021</div>
<div style="position:absolute;top:274px;font-size:14.00px;line-height:20px;color:#333;white-space:pre;-webkit-text-stroke:0.16px #333;left:1237.0px;transform:scaleX(0.9030);transform-origin:0 50%;">30-481-3036</div>
<div style="position:absolute;top:274px;font-size:14.00px;line-height:20px;color:#333;white-space:pre;-webkit-text-stroke:0.16px #333;left:1361.0px;transform:scaleX(0.9030);transform-origin:0 50%;">Aldrich Phythien</div>
<div style="position:absolute;top:274px;font-size:14.00px;line-height:20px;color:#333;white-space:pre;-webkit-text-stroke:0.16px #333;left:1506.0px;transform:scaleX(0.9030);transform-origin:0 50%;">Phythien</div>
<div style="position:absolute;top:274px;font-size:14.00px;line-height:20px;color:#333;white-space:pre;-webkit-text-stroke:0.16px #333;left:1619.0px;transform:scaleX(0.9030);transform-origin:0 50%;">Aldrich</div>
<div style="position:absolute;top:274px;font-size:14.00px;line-height:20px;color:#333;white-space:pre;-webkit-text-stroke:0.16px #333;left:1733.0px;transform:scaleX(0.9030);transform-origin:0 50%;">Lubbock</div>
<div style="position:absolute;top:274px;font-size:14.00px;line-height:20px;color:#333;white-space:pre;-webkit-text-stroke:0.16px #333;left:1856.0px;transform:scaleX(0.9030);transform-origin:0 50%;">United States</div>
<div style="position:absolute;top:274px;font-size:14.00px;line-height:20px;color:#333;white-space:pre;-webkit-text-stroke:0.16px #333;left:1959.0px;transform:scaleX(0.9030);transform-origin:0 50%;">33649</div>
<div style="position:absolute;top:274px;font-size:14.00px;line-height:20px;color:#333;white-space:pre;-webkit-text-stroke:0.16px #333;left:2079.0px;transform:scaleX(0.9030);transform-origin:0 50%;">US</div>
<div style="position:absolute;top:274px;font-size:14.00px;line-height:20px;color:#333;white-space:pre;-webkit-text-stroke:0.16px #333;right:297.5px;text-align:right;transform:scaleX(0.9030);transform-origin:100% 50%;">52.080</div>
<div style="position:absolute;top:274px;font-size:14.00px;line-height:20px;color:#333;white-space:pre;-webkit-text-stroke:0.16px #333;right:215.5px;text-align:right;transform:scaleX(0.9030);transform-origin:100% 50%;">78.120</div>
<div style="position:absolute;top:274px;font-size:14.00px;line-height:20px;color:#333;white-space:pre;-webkit-text-stroke:0.16px #333;right:132.5px;text-align:right;transform:scaleX(0.9030);transform-origin:100% 50%;">26.040</div>
<div style="position:absolute;top:274px;font-size:14.00px;line-height:20px;color:#333;white-space:pre;-webkit-text-stroke:0.16px #333;right:31.5px;text-align:right;transform:scaleX(0.9030);transform-origin:100% 50%;">2</div>
<div style="position:absolute;top:304px;font-size:14.00px;line-height:20px;color:#333;white-space:pre;-webkit-text-stroke:0.16px #333;right:1692.5px;text-align:right;transform:scaleX(0.9030);transform-origin:100% 50%;">548</div>
<div style="position:absolute;top:304px;font-size:14.00px;line-height:20px;color:#333;white-space:pre;-webkit-text-stroke:0.16px #333;left:893.0px;transform:scaleX(0.9030);transform-origin:0 50%;">61-509-9344</div>
<div style="position:absolute;top:304px;font-size:14.00px;line-height:20px;color:#333;white-space:pre;-webkit-text-stroke:0.16px #333;left:995.0px;transform:scaleX(0.9030);transform-origin:0 50%;">13<span style="display:inline-block;margin:0 2.05px;transform:scale(1.45,1.1)">/</span>02<span style="display:inline-block;margin:0 2.05px;transform:scale(1.45,1.1)">/</span>2021</div>
<div style="position:absolute;top:304px;font-size:14.00px;line-height:20px;color:#333;white-space:pre;-webkit-text-stroke:0.16px #333;left:1109.0px;transform:scaleX(0.9030);transform-origin:0 50%;">17<span style="display:inline-block;margin:0 2.05px;transform:scale(1.45,1.1)">/</span>12<span style="display:inline-block;margin:0 2.05px;transform:scale(1.45,1.1)">/</span>2020</div>
<div style="position:absolute;top:304px;font-size:14.00px;line-height:20px;color:#333;white-space:pre;-webkit-text-stroke:0.16px #333;left:1237.0px;transform:scaleX(0.9030);transform-origin:0 50%;">23-245-6549</div>
<div style="position:absolute;top:304px;font-size:14.00px;line-height:20px;color:#333;white-space:pre;-webkit-text-stroke:0.16px #333;left:1361.0px;transform:scaleX(0.9030);transform-origin:0 50%;">Dusty Yedall</div>
<div style="position:absolute;top:304px;font-size:14.00px;line-height:20px;color:#333;white-space:pre;-webkit-text-stroke:0.16px #333;left:1506.0px;transform:scaleX(0.9030);transform-origin:0 50%;">Yedall</div>
<div style="position:absolute;top:304px;font-size:14.00px;line-height:20px;color:#333;white-space:pre;-webkit-text-stroke:0.16px #333;left:1619.0px;transform:scaleX(0.9030);transform-origin:0 50%;">Dusty</div>
<div style="position:absolute;top:304px;font-size:14.00px;line-height:20px;color:#333;white-space:pre;-webkit-text-stroke:0.16px #333;left:1733.0px;transform:scaleX(0.9030);transform-origin:0 50%;">Wilkes Barre</div>
<div style="position:absolute;top:304px;font-size:14.00px;line-height:20px;color:#333;white-space:pre;-webkit-text-stroke:0.16px #333;left:1856.0px;transform:scaleX(0.9030);transform-origin:0 50%;">United States</div>
<div style="position:absolute;top:304px;font-size:14.00px;line-height:20px;color:#333;white-space:pre;-webkit-text-stroke:0.16px #333;left:1959.0px;transform:scaleX(0.9030);transform-origin:0 50%;">987-0384</div>
<div style="position:absolute;top:304px;font-size:14.00px;line-height:20px;color:#333;white-space:pre;-webkit-text-stroke:0.16px #333;left:2079.0px;transform:scaleX(0.9030);transform-origin:0 50%;">US</div>
<div style="position:absolute;top:304px;font-size:14.00px;line-height:20px;color:#333;white-space:pre;-webkit-text-stroke:0.16px #333;right:297.5px;text-align:right;transform:scaleX(0.9030);transform-origin:100% 50%;">235.000</div>
<div style="position:absolute;top:304px;font-size:14.00px;line-height:20px;color:#333;white-space:pre;-webkit-text-stroke:0.16px #333;right:215.5px;text-align:right;transform:scaleX(0.9030);transform-origin:100% 50%;">352.500</div>
<div style="position:absolute;top:304px;font-size:14.00px;line-height:20px;color:#333;white-space:pre;-webkit-text-stroke:0.16px #333;right:132.5px;text-align:right;transform:scaleX(0.9030);transform-origin:100% 50%;">117.500</div>
<div style="position:absolute;top:304px;font-size:14.00px;line-height:20px;color:#333;white-space:pre;-webkit-text-stroke:0.16px #333;right:31.5px;text-align:right;transform:scaleX(0.9030);transform-origin:100% 50%;">3</div>
<div style="position:absolute;top:334px;font-size:14.00px;line-height:20px;color:#333;white-space:pre;-webkit-text-stroke:0.16px #333;right:1692.5px;text-align:right;transform:scaleX(0.9030);transform-origin:100% 50%;">574</div>
<div style="position:absolute;top:334px;font-size:14.00px;line-height:20px;color:#333;white-space:pre;-webkit-text-stroke:0.16px #333;left:893.0px;transform:scaleX(0.9030);transform-origin:0 50%;">52-708-9153</div>
<div style="position:absolute;top:334px;font-size:14.00px;line-height:20px;color:#333;white-space:pre;-webkit-text-stroke:0.16px #333;left:995.0px;transform:scaleX(0.9030);transform-origin:0 50%;">06<span style="display:inline-block;margin:0 2.05px;transform:scale(1.45,1.1)">/</span>01<span style="display:inline-block;margin:0 2.05px;transform:scale(1.45,1.1)">/</span>2023</div>
<div style="position:absolute;top:334px;font-size:14.00px;line-height:20px;color:#333;white-space:pre;-webkit-text-stroke:0.16px #333;left:1109.0px;transform:scaleX(0.9030);transform-origin:0 50%;">18<span style="display:inline-block;margin:0 2.05px;transform:scale(1.45,1.1)">/</span>11<span style="display:inline-block;margin:0 2.05px;transform:scale(1.45,1.1)">/</span>2022</div>
<div style="position:absolute;top:334px;font-size:14.00px;line-height:20px;color:#333;white-space:pre;-webkit-text-stroke:0.16px #333;left:1237.0px;transform:scaleX(0.9030);transform-origin:0 50%;">91-757-8892</div>
<div style="position:absolute;top:334px;font-size:14.00px;line-height:20px;color:#333;white-space:pre;-webkit-text-stroke:0.16px #333;left:1361.0px;transform:scaleX(0.9030);transform-origin:0 50%;">Roanna Safont</div>
<div style="position:absolute;top:334px;font-size:14.00px;line-height:20px;color:#333;white-space:pre;-webkit-text-stroke:0.16px #333;left:1506.0px;transform:scaleX(0.9030);transform-origin:0 50%;">Safont</div>
<div style="position:absolute;top:334px;font-size:14.00px;line-height:20px;color:#333;white-space:pre;-webkit-text-stroke:0.16px #333;left:1619.0px;transform:scaleX(0.9030);transform-origin:0 50%;">Roanna</div>
<div style="position:absolute;top:334px;font-size:14.00px;line-height:20px;color:#333;white-space:pre;-webkit-text-stroke:0.16px #333;left:1733.0px;transform:scaleX(0.9030);transform-origin:0 50%;">Kansas City</div>
<div style="position:absolute;top:334px;font-size:14.00px;line-height:20px;color:#333;white-space:pre;-webkit-text-stroke:0.16px #333;left:1856.0px;transform:scaleX(0.9030);transform-origin:0 50%;">United States</div>
<div style="position:absolute;top:334px;font-size:14.00px;line-height:20px;color:#333;white-space:pre;-webkit-text-stroke:0.16px #333;left:1959.0px;transform:scaleX(0.9030);transform-origin:0 50%;">353748</div>
<div style="position:absolute;top:334px;font-size:14.00px;line-height:20px;color:#333;white-space:pre;-webkit-text-stroke:0.16px #333;left:2079.0px;transform:scaleX(0.9030);transform-origin:0 50%;">US</div>
<div style="position:absolute;top:334px;font-size:14.00px;line-height:20px;color:#333;white-space:pre;-webkit-text-stroke:0.16px #333;right:297.5px;text-align:right;transform:scaleX(0.9030);transform-origin:100% 50%;">210.000</div>
<div style="position:absolute;top:334px;font-size:14.00px;line-height:20px;color:#333;white-space:pre;-webkit-text-stroke:0.16px #333;right:215.5px;text-align:right;transform:scaleX(0.9030);transform-origin:100% 50%;">315.000</div>
<div style="position:absolute;top:334px;font-size:14.00px;line-height:20px;color:#333;white-space:pre;-webkit-text-stroke:0.16px #333;right:132.5px;text-align:right;transform:scaleX(0.9030);transform-origin:100% 50%;">105.000</div>
<div style="position:absolute;top:334px;font-size:14.00px;line-height:20px;color:#333;white-space:pre;-webkit-text-stroke:0.16px #333;right:31.5px;text-align:right;transform:scaleX(0.9030);transform-origin:100% 50%;">1</div>
<div style="position:absolute;top:364px;font-size:14.00px;line-height:20px;color:#333;white-space:pre;-webkit-text-stroke:0.16px #333;right:1692.5px;text-align:right;transform:scaleX(0.9030);transform-origin:100% 50%;">581</div>
<div style="position:absolute;top:364px;font-size:14.00px;line-height:20px;color:#333;white-space:pre;-webkit-text-stroke:0.16px #333;left:893.0px;transform:scaleX(0.9030);transform-origin:0 50%;">66-576-7484</div>
<div style="position:absolute;top:364px;font-size:14.00px;line-height:20px;color:#333;white-space:pre;-webkit-text-stroke:0.16px #333;left:995.0px;transform:scaleX(0.9030);transform-origin:0 50%;">16<span style="display:inline-block;margin:0 2.05px;transform:scale(1.45,1.1)">/</span>09<span style="display:inline-block;margin:0 2.05px;transform:scale(1.45,1.1)">/</span>2019</div>
<div style="position:absolute;top:364px;font-size:14.00px;line-height:20px;color:#333;white-space:pre;-webkit-text-stroke:0.16px #333;left:1109.0px;transform:scaleX(0.9030);transform-origin:0 50%;">24<span style="display:inline-block;margin:0 2.05px;transform:scale(1.45,1.1)">/</span>05<span style="display:inline-block;margin:0 2.05px;transform:scale(1.45,1.1)">/</span>2020</div>
<div style="position:absolute;top:364px;font-size:14.00px;line-height:20px;color:#333;white-space:pre;-webkit-text-stroke:0.16px #333;left:1237.0px;transform:scaleX(0.9030);transform-origin:0 50%;">45-619-6096</div>
<div style="position:absolute;top:364px;font-size:14.00px;line-height:20px;color:#333;white-space:pre;-webkit-text-stroke:0.16px #333;left:1361.0px;transform:scaleX(0.9030);transform-origin:0 50%;">Richie Brydson</div>
<div style="position:absolute;top:364px;font-size:14.00px;line-height:20px;color:#333;white-space:pre;-webkit-text-stroke:0.16px #333;left:1506.0px;transform:scaleX(0.9030);transform-origin:0 50%;">Brydson</div>
<div style="position:absolute;top:364px;font-size:14.00px;line-height:20px;color:#333;white-space:pre;-webkit-text-stroke:0.16px #333;left:1619.0px;transform:scaleX(0.9030);transform-origin:0 50%;">Richie</div>
<div style="position:absolute;top:364px;font-size:14.00px;line-height:20px;color:#333;white-space:pre;-webkit-text-stroke:0.16px #333;left:1733.0px;transform:scaleX(0.9030);transform-origin:0 50%;">Chesapeake</div>
<div style="position:absolute;top:364px;font-size:14.00px;line-height:20px;color:#333;white-space:pre;-webkit-text-stroke:0.16px #333;left:1856.0px;transform:scaleX(0.9030);transform-origin:0 50%;">United States</div>
<div style="position:absolute;top:364px;font-size:14.00px;line-height:20px;color:#333;white-space:pre;-webkit-text-stroke:0.16px #333;left:1959.0px;transform:scaleX(0.9030);transform-origin:0 50%;">31056798</div>
<div style="position:absolute;top:364px;font-size:14.00px;line-height:20px;color:#333;white-space:pre;-webkit-text-stroke:0.16px #333;left:2079.0px;transform:scaleX(0.9030);transform-origin:0 50%;">US</div>
<div style="position:absolute;top:364px;font-size:14.00px;line-height:20px;color:#333;white-space:pre;-webkit-text-stroke:0.16px #333;right:297.5px;text-align:right;transform:scaleX(0.9030);transform-origin:100% 50%;">144.090</div>
<div style="position:absolute;top:364px;font-size:14.00px;line-height:20px;color:#333;white-space:pre;-webkit-text-stroke:0.16px #333;right:215.5px;text-align:right;transform:scaleX(0.9030);transform-origin:100% 50%;">216.135</div>
<div style="position:absolute;top:364px;font-size:14.00px;line-height:20px;color:#333;white-space:pre;-webkit-text-stroke:0.16px #333;right:132.5px;text-align:right;transform:scaleX(0.9030);transform-origin:100% 50%;">72.045</div>
<div style="position:absolute;top:364px;font-size:14.00px;line-height:20px;color:#333;white-space:pre;-webkit-text-stroke:0.16px #333;right:31.5px;text-align:right;transform:scaleX(0.9030);transform-origin:100% 50%;">2</div>
<div style="position:absolute;top:394px;font-size:14.00px;line-height:20px;color:#333;white-space:pre;-webkit-text-stroke:0.16px #333;right:1692.5px;text-align:right;transform:scaleX(0.9030);transform-origin:100% 50%;">608</div>
<div style="position:absolute;top:394px;font-size:14.00px;line-height:20px;color:#333;white-space:pre;-webkit-text-stroke:0.16px #333;left:893.0px;transform:scaleX(0.9030);transform-origin:0 50%;">27-252-7456</div>
<div style="position:absolute;top:394px;font-size:14.00px;line-height:20px;color:#333;white-space:pre;-webkit-text-stroke:0.16px #333;left:995.0px;transform:scaleX(0.9030);transform-origin:0 50%;">15<span style="display:inline-block;margin:0 2.05px;transform:scale(1.45,1.1)">/</span>10<span style="display:inline-block;margin:0 2.05px;transform:scale(1.45,1.1)">/</span>2022</div>
<div style="position:absolute;top:394px;font-size:14.00px;line-height:20px;color:#333;white-space:pre;-webkit-text-stroke:0.16px #333;left:1109.0px;transform:scaleX(0.9030);transform-origin:0 50%;">02<span style="display:inline-block;margin:0 2.05px;transform:scale(1.45,1.1)">/</span>10<span style="display:inline-block;margin:0 2.05px;transform:scale(1.45,1.1)">/</span>2022</div>
<div style="position:absolute;top:394px;font-size:14.00px;line-height:20px;color:#333;white-space:pre;-webkit-text-stroke:0.16px #333;left:1237.0px;transform:scaleX(0.9030);transform-origin:0 50%;">47-423-8685</div>
<div style="position:absolute;top:394px;font-size:14.00px;line-height:20px;color:#333;white-space:pre;-webkit-text-stroke:0.16px #333;left:1361.0px;transform:scaleX(0.9030);transform-origin:0 50%;">Alfreda Chasmer</div>
<div style="position:absolute;top:394px;font-size:14.00px;line-height:20px;color:#333;white-space:pre;-webkit-text-stroke:0.16px #333;left:1506.0px;transform:scaleX(0.9030);transform-origin:0 50%;">Chasmer</div>
<div style="position:absolute;top:394px;font-size:14.00px;line-height:20px;color:#333;white-space:pre;-webkit-text-stroke:0.16px #333;left:1619.0px;transform:scaleX(0.9030);transform-origin:0 50%;">Alfreda</div>
<div style="position:absolute;top:394px;font-size:14.00px;line-height:20px;color:#333;white-space:pre;-webkit-text-stroke:0.16px #333;left:1733.0px;transform:scaleX(0.9030);transform-origin:0 50%;">Fort Smith</div>
<div style="position:absolute;top:394px;font-size:14.00px;line-height:20px;color:#333;white-space:pre;-webkit-text-stroke:0.16px #333;left:1856.0px;transform:scaleX(0.9030);transform-origin:0 50%;">United States</div>
<div style="position:absolute;top:394px;font-size:14.00px;line-height:20px;color:#333;white-space:pre;-webkit-text-stroke:0.16px #333;left:1959.0px;transform:scaleX(0.9030);transform-origin:0 50%;">353750</div>
<div style="position:absolute;top:394px;font-size:14.00px;line-height:20px;color:#333;white-space:pre;-webkit-text-stroke:0.16px #333;left:2079.0px;transform:scaleX(0.9030);transform-origin:0 50%;">US</div>
<div style="position:absolute;top:394px;font-size:14.00px;line-height:20px;color:#333;white-space:pre;-webkit-text-stroke:0.16px #333;right:297.5px;text-align:right;transform:scaleX(0.9030);transform-origin:100% 50%;">133.170</div>
<div style="position:absolute;top:394px;font-size:14.00px;line-height:20px;color:#333;white-space:pre;-webkit-text-stroke:0.16px #333;right:215.5px;text-align:right;transform:scaleX(0.9030);transform-origin:100% 50%;">199.755</div>
<div style="position:absolute;top:394px;font-size:14.00px;line-height:20px;color:#333;white-space:pre;-webkit-text-stroke:0.16px #333;right:132.5px;text-align:right;transform:scaleX(0.9030);transform-origin:100% 50%;">66.585</div>
<div style="position:absolute;top:394px;font-size:14.00px;line-height:20px;color:#333;white-space:pre;-webkit-text-stroke:0.16px #333;right:31.5px;text-align:right;transform:scaleX(0.9030);transform-origin:100% 50%;">3</div>
<div style="position:absolute;top:424px;font-size:14.00px;line-height:20px;color:#333;white-space:pre;-webkit-text-stroke:0.16px #333;right:1692.5px;text-align:right;transform:scaleX(0.9030);transform-origin:100% 50%;">617</div>
<div style="position:absolute;top:424px;font-size:14.00px;line-height:20px;color:#333;white-space:pre;-webkit-text-stroke:0.16px #333;left:893.0px;transform:scaleX(0.9030);transform-origin:0 50%;">67-156-1140</div>
<div style="position:absolute;top:424px;font-size:14.00px;line-height:20px;color:#333;white-space:pre;-webkit-text-stroke:0.16px #333;left:995.0px;transform:scaleX(0.9030);transform-origin:0 50%;">20<span style="display:inline-block;margin:0 2.05px;transform:scale(1.45,1.1)">/</span>03<span style="display:inline-block;margin:0 2.05px;transform:scale(1.45,1.1)">/</span>2020</div>
<div style="position:absolute;top:424px;font-size:14.00px;line-height:20px;color:#333;white-space:pre;-webkit-text-stroke:0.16px #333;left:1109.0px;transform:scaleX(0.9030);transform-origin:0 50%;">19<span style="display:inline-block;margin:0 2.05px;transform:scale(1.45,1.1)">/</span>03<span style="display:inline-block;margin:0 2.05px;transform:scale(1.45,1.1)">/</span>2020</div>
<div style="position:absolute;top:424px;font-size:14.00px;line-height:20px;color:#333;white-space:pre;-webkit-text-stroke:0.16px #333;left:1237.0px;transform:scaleX(0.9030);transform-origin:0 50%;">77-254-6430</div>
<div style="position:absolute;top:424px;font-size:14.00px;line-height:20px;color:#333;white-space:pre;-webkit-text-stroke:0.16px #333;left:1361.0px;transform:scaleX(0.9030);transform-origin:0 50%;">Renato Paulin</div>
<div style="position:absolute;top:424px;font-size:14.00px;line-height:20px;color:#333;white-space:pre;-webkit-text-stroke:0.16px #333;left:1506.0px;transform:scaleX(0.9030);transform-origin:0 50%;">Paulin</div>
<div style="position:absolute;top:424px;font-size:14.00px;line-height:20px;color:#333;white-space:pre;-webkit-text-stroke:0.16px #333;left:1619.0px;transform:scaleX(0.9030);transform-origin:0 50%;">Renato</div>
<div style="position:absolute;top:424px;font-size:14.00px;line-height:20px;color:#333;white-space:pre;-webkit-text-stroke:0.16px #333;left:1733.0px;transform:scaleX(0.9030);transform-origin:0 50%;">Grand Junction</div>
<div style="position:absolute;top:424px;font-size:14.00px;line-height:20px;color:#333;white-space:pre;-webkit-text-stroke:0.16px #333;left:1856.0px;transform:scaleX(0.9030);transform-origin:0 50%;">United States</div>
<div style="position:absolute;top:424px;font-size:14.00px;line-height:20px;color:#333;white-space:pre;-webkit-text-stroke:0.16px #333;left:1959.0px;transform:scaleX(0.9030);transform-origin:0 50%;">387 01</div>
<div style="position:absolute;top:424px;font-size:14.00px;line-height:20px;color:#333;white-space:pre;-webkit-text-stroke:0.16px #333;left:2079.0px;transform:scaleX(0.9030);transform-origin:0 50%;">US</div>
<div style="position:absolute;top:424px;font-size:14.00px;line-height:20px;color:#333;white-space:pre;-webkit-text-stroke:0.16px #333;right:297.5px;text-align:right;transform:scaleX(0.9030);transform-origin:100% 50%;">320.000</div>
<div style="position:absolute;top:424px;font-size:14.00px;line-height:20px;color:#333;white-space:pre;-webkit-text-stroke:0.16px #333;right:215.5px;text-align:right;transform:scaleX(0.9030);transform-origin:100% 50%;">480.000</div>
<div style="position:absolute;top:424px;font-size:14.00px;line-height:20px;color:#333;white-space:pre;-webkit-text-stroke:0.16px #333;right:132.5px;text-align:right;transform:scaleX(0.9030);transform-origin:100% 50%;">160.000</div>
<div style="position:absolute;top:424px;font-size:14.00px;line-height:20px;color:#333;white-space:pre;-webkit-text-stroke:0.16px #333;right:31.5px;text-align:right;transform:scaleX(0.9030);transform-origin:100% 50%;">2</div>
<div style="position:absolute;top:454px;font-size:14.00px;line-height:20px;color:#333;white-space:pre;-webkit-text-stroke:0.16px #333;right:1692.5px;text-align:right;transform:scaleX(0.9030);transform-origin:100% 50%;">618</div>
<div style="position:absolute;top:454px;font-size:14.00px;line-height:20px;color:#333;white-space:pre;-webkit-text-stroke:0.16px #333;left:893.0px;transform:scaleX(0.9030);transform-origin:0 50%;">53-131-0339</div>
<div style="position:absolute;top:454px;font-size:14.00px;line-height:20px;color:#333;white-space:pre;-webkit-text-stroke:0.16px #333;left:995.0px;transform:scaleX(0.9030);transform-origin:0 50%;">22<span style="display:inline-block;margin:0 2.05px;transform:scale(1.45,1.1)">/</span>06<span style="display:inline-block;margin:0 2.05px;transform:scale(1.45,1.1)">/</span>2021</div>
<div style="position:absolute;top:454px;font-size:14.00px;line-height:20px;color:#333;white-space:pre;-webkit-text-stroke:0.16px #333;left:1109.0px;transform:scaleX(0.9030);transform-origin:0 50%;">25<span style="display:inline-block;margin:0 2.05px;transform:scale(1.45,1.1)">/</span>01<span style="display:inline-block;margin:0 2.05px;transform:scale(1.45,1.1)">/</span>2021</div>
<div style="position:absolute;top:454px;font-size:14.00px;line-height:20px;color:#333;white-space:pre;-webkit-text-stroke:0.16px #333;left:1237.0px;transform:scaleX(0.9030);transform-origin:0 50%;">19-203-6248</div>
<div style="position:absolute;top:454px;font-size:14.00px;line-height:20px;color:#333;white-space:pre;-webkit-text-stroke:0.16px #333;left:1361.0px;transform:scaleX(0.9030);transform-origin:0 50%;">Janeva Silman</div>
<div style="position:absolute;top:454px;font-size:14.00px;line-height:20px;color:#333;white-space:pre;-webkit-text-stroke:0.16px #333;left:1506.0px;transform:scaleX(0.9030);transform-origin:0 50%;">Silman</div>
<div style="position:absolute;top:454px;font-size:14.00px;line-height:20px;color:#333;white-space:pre;-webkit-text-stroke:0.16px #333;left:1619.0px;transform:scaleX(0.9030);transform-origin:0 50%;">Janeva</div>
<div style="position:absolute;top:454px;font-size:14.00px;line-height:20px;color:#333;white-space:pre;-webkit-text-stroke:0.16px #333;left:1733.0px;transform:scaleX(0.9030);transform-origin:0 50%;">Birmingham</div>
<div style="position:absolute;top:454px;font-size:14.00px;line-height:20px;color:#333;white-space:pre;-webkit-text-stroke:0.16px #333;left:1856.0px;transform:scaleX(0.9030);transform-origin:0 50%;">United States</div>
<div style="position:absolute;top:454px;font-size:14.00px;line-height:20px;color:#333;white-space:pre;-webkit-text-stroke:0.16px #333;left:1959.0px;transform:scaleX(0.9030);transform-origin:0 50%;">39504275</div>
<div style="position:absolute;top:454px;font-size:14.00px;line-height:20px;color:#333;white-space:pre;-webkit-text-stroke:0.16px #333;left:2079.0px;transform:scaleX(0.9030);transform-origin:0 50%;">US</div>
<div style="position:absolute;top:454px;font-size:14.00px;line-height:20px;color:#333;white-space:pre;-webkit-text-stroke:0.16px #333;right:297.5px;text-align:right;transform:scaleX(0.9030);transform-origin:100% 50%;">210.000</div>
<div style="position:absolute;top:454px;font-size:14.00px;line-height:20px;color:#333;white-space:pre;-webkit-text-stroke:0.16px #333;right:215.5px;text-align:right;transform:scaleX(0.9030);transform-origin:100% 50%;">315.000</div>
<div style="position:absolute;top:454px;font-size:14.00px;line-height:20px;color:#333;white-space:pre;-webkit-text-stroke:0.16px #333;right:132.5px;text-align:right;transform:scaleX(0.9030);transform-origin:100% 50%;">105.000</div>
<div style="position:absolute;top:454px;font-size:14.00px;line-height:20px;color:#333;white-space:pre;-webkit-text-stroke:0.16px #333;right:31.5px;text-align:right;transform:scaleX(0.9030);transform-origin:100% 50%;">1</div>
<div style="position:absolute;top:484px;font-size:14.00px;line-height:20px;color:#333;white-space:pre;-webkit-text-stroke:0.16px #333;right:1692.5px;text-align:right;transform:scaleX(0.9030);transform-origin:100% 50%;">652</div>
<div style="position:absolute;top:484px;font-size:14.00px;line-height:20px;color:#333;white-space:pre;-webkit-text-stroke:0.16px #333;left:893.0px;transform:scaleX(0.9030);transform-origin:0 50%;">83-547-0450</div>
<div style="position:absolute;top:484px;font-size:14.00px;line-height:20px;color:#333;white-space:pre;-webkit-text-stroke:0.16px #333;left:995.0px;transform:scaleX(0.9030);transform-origin:0 50%;">24<span style="display:inline-block;margin:0 2.05px;transform:scale(1.45,1.1)">/</span>04<span style="display:inline-block;margin:0 2.05px;transform:scale(1.45,1.1)">/</span>2021</div>
<div style="position:absolute;top:484px;font-size:14.00px;line-height:20px;color:#333;white-space:pre;-webkit-text-stroke:0.16px #333;left:1109.0px;transform:scaleX(0.9030);transform-origin:0 50%;">09<span style="display:inline-block;margin:0 2.05px;transform:scale(1.45,1.1)">/</span>12<span style="display:inline-block;margin:0 2.05px;transform:scale(1.45,1.1)">/</span>2022</div>
<div style="position:absolute;top:484px;font-size:14.00px;line-height:20px;color:#333;white-space:pre;-webkit-text-stroke:0.16px #333;left:1237.0px;transform:scaleX(0.9030);transform-origin:0 50%;">71-908-5082</div>
<div style="position:absolute;top:484px;font-size:14.00px;line-height:20px;color:#333;white-space:pre;-webkit-text-stroke:0.16px #333;left:1361.0px;transform:scaleX(0.9030);transform-origin:0 50%;">Wenona MacGinlay</div>
<div style="position:absolute;top:484px;font-size:14.00px;line-height:20px;color:#333;white-space:pre;-webkit-text-stroke:0.16px #333;left:1506.0px;transform:scaleX(0.9030);transform-origin:0 50%;">MacGinlay</div>
<div style="position:absolute;top:484px;font-size:14.00px;line-height:20px;color:#333;white-space:pre;-webkit-text-stroke:0.16px #333;left:1619.0px;transform:scaleX(0.9030);transform-origin:0 50%;">Wenona</div>
<div style="position:absolute;top:484px;font-size:14.00px;line-height:20px;color:#333;white-space:pre;-webkit-text-stroke:0.16px #333;left:1733.0px;transform:scaleX(0.9030);transform-origin:0 50%;">Chicago</div>
<div style="position:absolute;top:484px;font-size:14.00px;line-height:20px;color:#333;white-space:pre;-webkit-text-stroke:0.16px #333;left:1856.0px;transform:scaleX(0.9030);transform-origin:0 50%;">United States</div>
<div style="position:absolute;top:484px;font-size:14.00px;line-height:20px;color:#333;white-space:pre;-webkit-text-stroke:0.16px #333;left:1959.0px;transform:scaleX(0.9030);transform-origin:0 50%;">41693735</div>
<div style="position:absolute;top:484px;font-size:14.00px;line-height:20px;color:#333;white-space:pre;-webkit-text-stroke:0.16px #333;left:2079.0px;transform:scaleX(0.9030);transform-origin:0 50%;">US</div>
<div style="position:absolute;top:484px;font-size:14.00px;line-height:20px;color:#333;white-space:pre;-webkit-text-stroke:0.16px #333;right:297.5px;text-align:right;transform:scaleX(0.9030);transform-origin:100% 50%;">133.170</div>
<div style="position:absolute;top:484px;font-size:14.00px;line-height:20px;color:#333;white-space:pre;-webkit-text-stroke:0.16px #333;right:215.5px;text-align:right;transform:scaleX(0.9030);transform-origin:100% 50%;">199.755</div>
<div style="position:absolute;top:484px;font-size:14.00px;line-height:20px;color:#333;white-space:pre;-webkit-text-stroke:0.16px #333;right:132.5px;text-align:right;transform:scaleX(0.9030);transform-origin:100% 50%;">66.585</div>
<div style="position:absolute;top:484px;font-size:14.00px;line-height:20px;color:#333;white-space:pre;-webkit-text-stroke:0.16px #333;right:31.5px;text-align:right;transform:scaleX(0.9030);transform-origin:100% 50%;">3</div>
<div style="position:absolute;top:514px;font-size:14.00px;line-height:20px;color:#333;white-space:pre;-webkit-text-stroke:0.16px #333;right:1692.5px;text-align:right;transform:scaleX(0.9030);transform-origin:100% 50%;">671</div>
<div style="position:absolute;top:514px;font-size:14.00px;line-height:20px;color:#333;white-space:pre;-webkit-text-stroke:0.16px #333;left:893.0px;transform:scaleX(0.9030);transform-origin:0 50%;">53-322-3671</div>
<div style="position:absolute;top:514px;font-size:14.00px;line-height:20px;color:#333;white-space:pre;-webkit-text-stroke:0.16px #333;left:995.0px;transform:scaleX(0.9030);transform-origin:0 50%;">13<span style="display:inline-block;margin:0 2.05px;transform:scale(1.45,1.1)">/</span>01<span style="display:inline-block;margin:0 2.05px;transform:scale(1.45,1.1)">/</span>2021</div>
<div style="position:absolute;top:514px;font-size:14.00px;line-height:20px;color:#333;white-space:pre;-webkit-text-stroke:0.16px #333;left:1109.0px;transform:scaleX(0.9030);transform-origin:0 50%;">28<span style="display:inline-block;margin:0 2.05px;transform:scale(1.45,1.1)">/</span>03<span style="display:inline-block;margin:0 2.05px;transform:scale(1.45,1.1)">/</span>2022</div>
<div style="position:absolute;top:514px;font-size:14.00px;line-height:20px;color:#333;white-space:pre;-webkit-text-stroke:0.16px #333;left:1237.0px;transform:scaleX(0.9030);transform-origin:0 50%;">13-040-2063</div>
<div style="position:absolute;top:514px;font-size:14.00px;line-height:20px;color:#333;white-space:pre;-webkit-text-stroke:0.16px #333;left:1361.0px;transform:scaleX(0.9030);transform-origin:0 50%;">Karissa Sancraft</div>
<div style="position:absolute;top:514px;font-size:14.00px;line-height:20px;color:#333;white-space:pre;-webkit-text-stroke:0.16px #333;left:1506.0px;transform:scaleX(0.9030);transform-origin:0 50%;">Sancraft</div>
<div style="position:absolute;top:514px;font-size:14.00px;line-height:20px;color:#333;white-space:pre;-webkit-text-stroke:0.16px #333;left:1619.0px;transform:scaleX(0.9030);transform-origin:0 50%;">Karissa</div>
<div style="position:absolute;top:514px;font-size:14.00px;line-height:20px;color:#333;white-space:pre;-webkit-text-stroke:0.16px #333;left:1733.0px;transform:scaleX(0.9030);transform-origin:0 50%;">Pompano Beach</div>
<div style="position:absolute;top:514px;font-size:14.00px;line-height:20px;color:#333;white-space:pre;-webkit-text-stroke:0.16px #333;left:1856.0px;transform:scaleX(0.9030);transform-origin:0 50%;">United States</div>
<div style="position:absolute;top:514px;font-size:14.00px;line-height:20px;color:#333;white-space:pre;-webkit-text-stroke:0.16px #333;left:1959.0px;transform:scaleX(0.9030);transform-origin:0 50%;">3810-799</div>
<div style="position:absolute;top:514px;font-size:14.00px;line-height:20px;color:#333;white-space:pre;-webkit-text-stroke:0.16px #333;left:2079.0px;transform:scaleX(0.9030);transform-origin:0 50%;">US</div>
<div style="position:absolute;top:514px;font-size:14.00px;line-height:20px;color:#333;white-space:pre;-webkit-text-stroke:0.16px #333;right:297.5px;text-align:right;transform:scaleX(0.9030);transform-origin:100% 50%;">93.130</div>
<div style="position:absolute;top:514px;font-size:14.00px;line-height:20px;color:#333;white-space:pre;-webkit-text-stroke:0.16px #333;right:215.5px;text-align:right;transform:scaleX(0.9030);transform-origin:100% 50%;">139.695</div>
<div style="position:absolute;top:514px;font-size:14.00px;line-height:20px;color:#333;white-space:pre;-webkit-text-stroke:0.16px #333;right:132.5px;text-align:right;transform:scaleX(0.9030);transform-origin:100% 50%;">46.565</div>
<div style="position:absolute;top:514px;font-size:14.00px;line-height:20px;color:#333;white-space:pre;-webkit-text-stroke:0.16px #333;right:31.5px;text-align:right;transform:scaleX(0.9030);transform-origin:100% 50%;">2</div>
<div style="position:absolute;top:544px;font-size:14.00px;line-height:20px;color:#333;white-space:pre;-webkit-text-stroke:0.16px #333;right:1692.5px;text-align:right;transform:scaleX(0.9030);transform-origin:100% 50%;">689</div>
<div style="position:absolute;top:544px;font-size:14.00px;line-height:20px;color:#333;white-space:pre;-webkit-text-stroke:0.16px #333;left:893.0px;transform:scaleX(0.9030);transform-origin:0 50%;">92-859-5564</div>
<div style="position:absolute;top:544px;font-size:14.00px;line-height:20px;color:#333;white-space:pre;-webkit-text-stroke:0.16px #333;left:995.0px;transform:scaleX(0.9030);transform-origin:0 50%;">16<span style="display:inline-block;margin:0 2.05px;transform:scale(1.45,1.1)">/</span>01<span style="display:inline-block;margin:0 2.05px;transform:scale(1.45,1.1)">/</span>2021</div>
<div style="position:absolute;top:544px;font-size:14.00px;line-height:20px;color:#333;white-space:pre;-webkit-text-stroke:0.16px #333;left:1109.0px;transform:scaleX(0.9030);transform-origin:0 50%;">30<span style="display:inline-block;margin:0 2.05px;transform:scale(1.45,1.1)">/</span>03<span style="display:inline-block;margin:0 2.05px;transform:scale(1.45,1.1)">/</span>2022</div>
<div style="position:absolute;top:544px;font-size:14.00px;line-height:20px;color:#333;white-space:pre;-webkit-text-stroke:0.16px #333;left:1237.0px;transform:scaleX(0.9030);transform-origin:0 50%;">78-969-3391</div>
<div style="position:absolute;top:544px;font-size:14.00px;line-height:20px;color:#333;white-space:pre;-webkit-text-stroke:0.16px #333;left:1361.0px;transform:scaleX(0.9030);transform-origin:0 50%;">Vale Norwood</div>
<div style="position:absolute;top:544px;font-size:14.00px;line-height:20px;color:#333;white-space:pre;-webkit-text-stroke:0.16px #333;left:1506.0px;transform:scaleX(0.9030);transform-origin:0 50%;">Norwood</div>
<div style="position:absolute;top:544px;font-size:14.00px;line-height:20px;color:#333;white-space:pre;-webkit-text-stroke:0.16px #333;left:1619.0px;transform:scaleX(0.9030);transform-origin:0 50%;">Vale</div>
<div style="position:absolute;top:544px;font-size:14.00px;line-height:20px;color:#333;white-space:pre;-webkit-text-stroke:0.16px #333;left:1733.0px;transform:scaleX(0.9030);transform-origin:0 50%;">Atlanta</div>
<div style="position:absolute;top:544px;font-size:14.00px;line-height:20px;color:#333;white-space:pre;-webkit-text-stroke:0.16px #333;left:1856.0px;transform:scaleX(0.9030);transform-origin:0 50%;">United States</div>
<div style="position:absolute;top:544px;font-size:14.00px;line-height:20px;color:#333;white-space:pre;-webkit-text-stroke:0.16px #333;left:1959.0px;transform:scaleX(0.9030);transform-origin:0 50%;">692809</div>
<div style="position:absolute;top:544px;font-size:14.00px;line-height:20px;color:#333;white-space:pre;-webkit-text-stroke:0.16px #333;left:2079.0px;transform:scaleX(0.9030);transform-origin:0 50%;">US</div>
<div style="position:absolute;top:544px;font-size:14.00px;line-height:20px;color:#333;white-space:pre;-webkit-text-stroke:0.16px #333;right:297.5px;text-align:right;transform:scaleX(0.9030);transform-origin:100% 50%;">168.270</div>
<div style="position:absolute;top:544px;font-size:14.00px;line-height:20px;color:#333;white-space:pre;-webkit-text-stroke:0.16px #333;right:215.5px;text-align:right;transform:scaleX(0.9030);transform-origin:100% 50%;">252.405</div>
<div style="position:absolute;top:544px;font-size:14.00px;line-height:20px;color:#333;white-space:pre;-webkit-text-stroke:0.16px #333;right:132.5px;text-align:right;transform:scaleX(0.9030);transform-origin:100% 50%;">84.135</div>
<div style="position:absolute;top:544px;font-size:14.00px;line-height:20px;color:#333;white-space:pre;-webkit-text-stroke:0.16px #333;right:31.5px;text-align:right;transform:scaleX(0.9030);transform-origin:100% 50%;">2</div>
<div style="position:absolute;top:574px;font-size:14.00px;line-height:20px;color:#333;white-space:pre;-webkit-text-stroke:0.16px #333;right:1692.5px;text-align:right;transform:scaleX(0.9030);transform-origin:100% 50%;">700</div>
<div style="position:absolute;top:574px;font-size:14.00px;line-height:20px;color:#333;white-space:pre;-webkit-text-stroke:0.16px #333;left:893.0px;transform:scaleX(0.9030);transform-origin:0 50%;">95-935-6126</div>
<div style="position:absolute;top:574px;font-size:14.00px;line-height:20px;color:#333;white-space:pre;-webkit-text-stroke:0.16px #333;left:995.0px;transform:scaleX(0.9030);transform-origin:0 50%;">08<span style="display:inline-block;margin:0 2.05px;transform:scale(1.45,1.1)">/</span>06<span style="display:inline-block;margin:0 2.05px;transform:scale(1.45,1.1)">/</span>2021</div>
<div style="position:absolute;top:574px;font-size:14.00px;line-height:20px;color:#333;white-space:pre;-webkit-text-stroke:0.16px #333;left:1109.0px;transform:scaleX(0.9030);transform-origin:0 50%;">07<span style="display:inline-block;margin:0 2.05px;transform:scale(1.45,1.1)">/</span>02<span style="display:inline-block;margin:0 2.05px;transform:scale(1.45,1.1)">/</span>2020</div>
<div style="position:absolute;top:574px;font-size:14.00px;line-height:20px;color:#333;white-space:pre;-webkit-text-stroke:0.16px #333;left:1237.0px;transform:scaleX(0.9030);transform-origin:0 50%;">11-687-7365</div>
<div style="position:absolute;top:574px;font-size:14.00px;line-height:20px;color:#333;white-space:pre;-webkit-text-stroke:0.16px #333;left:1361.0px;transform:scaleX(0.9030);transform-origin:0 50%;">Lance Cheatle</div>
<div style="position:absolute;top:574px;font-size:14.00px;line-height:20px;color:#333;white-space:pre;-webkit-text-stroke:0.16px #333;left:1506.0px;transform:scaleX(0.9030);transform-origin:0 50%;">Cheatle</div>
<div style="position:absolute;top:574px;font-size:14.00px;line-height:20px;color:#333;white-space:pre;-webkit-text-stroke:0.16px #333;left:1619.0px;transform:scaleX(0.9030);transform-origin:0 50%;">Lance</div>
<div style="position:absolute;top:574px;font-size:14.00px;line-height:20px;color:#333;white-space:pre;-webkit-text-stroke:0.16px #333;left:1733.0px;transform:scaleX(0.9030);transform-origin:0 50%;">Newport Beach</div>
<div style="position:absolute;top:574px;font-size:14.00px;line-height:20px;color:#333;white-space:pre;-webkit-text-stroke:0.16px #333;left:1856.0px;transform:scaleX(0.9030);transform-origin:0 50%;">United States</div>
<div style="position:absolute;top:574px;font-size:14.00px;line-height:20px;color:#333;white-space:pre;-webkit-text-stroke:0.16px #333;left:1959.0px;transform:scaleX(0.9030);transform-origin:0 50%;">37314294</div>
<div style="position:absolute;top:574px;font-size:14.00px;line-height:20px;color:#333;white-space:pre;-webkit-text-stroke:0.16px #333;left:2079.0px;transform:scaleX(0.9030);transform-origin:0 50%;">US</div>
<div style="position:absolute;top:574px;font-size:14.00px;line-height:20px;color:#333;white-space:pre;-webkit-text-stroke:0.16px #333;right:297.5px;text-align:right;transform:scaleX(0.9030);transform-origin:100% 50%;">119.800</div>
<div style="position:absolute;top:574px;font-size:14.00px;line-height:20px;color:#333;white-space:pre;-webkit-text-stroke:0.16px #333;right:215.5px;text-align:right;transform:scaleX(0.9030);transform-origin:100% 50%;">179.700</div>
<div style="position:absolute;top:574px;font-size:14.00px;line-height:20px;color:#333;white-space:pre;-webkit-text-stroke:0.16px #333;right:132.5px;text-align:right;transform:scaleX(0.9030);transform-origin:100% 50%;">59.900</div>
<div style="position:absolute;top:574px;font-size:14.00px;line-height:20px;color:#333;white-space:pre;-webkit-text-stroke:0.16px #333;right:31.5px;text-align:right;transform:scaleX(0.9030);transform-origin:100% 50%;">3</div>
<div style="position:absolute;top:604px;font-size:14.00px;line-height:20px;color:#333;white-space:pre;-webkit-text-stroke:0.16px #333;right:1692.5px;text-align:right;transform:scaleX(0.9030);transform-origin:100% 50%;">713</div>
<div style="position:absolute;top:604px;font-size:14.00px;line-height:20px;color:#333;white-space:pre;-webkit-text-stroke:0.16px #333;left:893.0px;transform:scaleX(0.9030);transform-origin:0 50%;">90-256-2220</div>
<div style="position:absolute;top:604px;font-size:14.00px;line-height:20px;color:#333;white-space:pre;-webkit-text-stroke:0.16px #333;left:995.0px;transform:scaleX(0.9030);transform-origin:0 50%;">14<span style="display:inline-block;margin:0 2.05px;transform:scale(1.45,1.1)">/</span>06<span style="display:inline-block;margin:0 2.05px;transform:scale(1.45,1.1)">/</span>2019</div>
<div style="position:absolute;top:604px;font-size:14.00px;line-height:20px;color:#333;white-space:pre;-webkit-text-stroke:0.16px #333;left:1109.0px;transform:scaleX(0.9030);transform-origin:0 50%;">07<span style="display:inline-block;margin:0 2.05px;transform:scale(1.45,1.1)">/</span>11<span style="display:inline-block;margin:0 2.05px;transform:scale(1.45,1.1)">/</span>2020</div>
<div style="position:absolute;top:604px;font-size:14.00px;line-height:20px;color:#333;white-space:pre;-webkit-text-stroke:0.16px #333;left:1237.0px;transform:scaleX(0.9030);transform-origin:0 50%;">38-929-8372</div>
<div style="position:absolute;top:604px;font-size:14.00px;line-height:20px;color:#333;white-space:pre;-webkit-text-stroke:0.16px #333;left:1361.0px;transform:scaleX(0.9030);transform-origin:0 50%;">Sheree Cheich</div>
<div style="position:absolute;top:604px;font-size:14.00px;line-height:20px;color:#333;white-space:pre;-webkit-text-stroke:0.16px #333;left:1506.0px;transform:scaleX(0.9030);transform-origin:0 50%;">Cheich</div>
<div style="position:absolute;top:604px;font-size:14.00px;line-height:20px;color:#333;white-space:pre;-webkit-text-stroke:0.16px #333;left:1619.0px;transform:scaleX(0.9030);transform-origin:0 50%;">Sheree</div>
<div style="position:absolute;top:604px;font-size:14.00px;line-height:20px;color:#333;white-space:pre;-webkit-text-stroke:0.16px #333;left:1733.0px;transform:scaleX(0.9030);transform-origin:0 50%;">Buffalo</div>
<div style="position:absolute;top:604px;font-size:14.00px;line-height:20px;color:#333;white-space:pre;-webkit-text-stroke:0.16px #333;left:1856.0px;transform:scaleX(0.9030);transform-origin:0 50%;">United States</div>
<div style="position:absolute;top:604px;font-size:14.00px;line-height:20px;color:#333;white-space:pre;-webkit-text-stroke:0.16px #333;left:1959.0px;transform:scaleX(0.9030);transform-origin:0 50%;">-1.93535e+07</div>
<div style="position:absolute;top:604px;font-size:14.00px;line-height:20px;color:#333;white-space:pre;-webkit-text-stroke:0.16px #333;left:2079.0px;transform:scaleX(0.9030);transform-origin:0 50%;">US</div>
<div style="position:absolute;top:604px;font-size:14.00px;line-height:20px;color:#333;white-space:pre;-webkit-text-stroke:0.16px #333;right:297.5px;text-align:right;transform:scaleX(0.9030);transform-origin:100% 50%;">144.090</div>
<div style="position:absolute;top:604px;font-size:14.00px;line-height:20px;color:#333;white-space:pre;-webkit-text-stroke:0.16px #333;right:215.5px;text-align:right;transform:scaleX(0.9030);transform-origin:100% 50%;">216.135</div>
<div style="position:absolute;top:604px;font-size:14.00px;line-height:20px;color:#333;white-space:pre;-webkit-text-stroke:0.16px #333;right:132.5px;text-align:right;transform:scaleX(0.9030);transform-origin:100% 50%;">72.045</div>
<div style="position:absolute;top:604px;font-size:14.00px;line-height:20px;color:#333;white-space:pre;-webkit-text-stroke:0.16px #333;right:31.5px;text-align:right;transform:scaleX(0.9030);transform-origin:100% 50%;">3</div>
</div>
<div style="position:absolute;left:2543px;top:760px;width:9px;height:597px;background:#f4f4f4;"></div>
<div style="position:absolute;left:2542px;top:1357px;width:10px;height:15px;background:#fff;"></div>
<div style="position:absolute;left:2543px;top:775px;width:9px;height:119px;background:#c8c8c8;"></div>
<div style="position:absolute;left:756px;top:1372px;width:1796px;height:12px;background:#fff;"></div>
<div style="position:absolute;left:771px;top:1372px;width:1165px;height:11px;background:#c8c8c8;"></div>
<div style="position:absolute;left:8px;top:1384px;width:2544px;height:1px;background:#c4c4c4;"></div>
<div style="position:absolute;left:8px;top:1385px;width:2544px;height:29px;background:#e6e6e6;"></div>
<div style="position:absolute;left:8px;top:1385px;width:125px;height:29px;background:#f9f9f9;"></div>
<div style="position:absolute;left:8px;top:1414px;width:2544px;height:1px;background:#c9c9c9;"></div>
<div style="position:absolute;left:8px;top:1415px;width:2544px;height:16px;background:#ebebeb;"></div>
<div style="position:absolute;left:133px;top:1385px;width:1px;height:29px;background:#c4c4c4;"></div>
<div style="position:absolute;left:235px;top:1385px;width:1px;height:29px;background:#c4c4c4;"></div>
<div style="position:absolute;left:313px;top:1385px;width:1px;height:29px;background:#c4c4c4;"></div>
<div style="position:absolute;left:435px;top:1385px;width:1px;height:29px;background:#c4c4c4;"></div>
<div style="position:absolute;left:571px;top:1385px;width:1px;height:29px;background:#c4c4c4;"></div>
<div style="position:absolute;left:726px;top:1385px;width:1px;height:29px;background:#c4c4c4;"></div>
<div style="position:absolute;left:759px;top:1385px;width:1px;height:29px;background:#c4c4c4;"></div>
<div style="position:absolute;left:790px;top:1385px;width:1px;height:29px;background:#c4c4c4;"></div>
<div style="position:absolute;left:822px;top:1385px;width:1px;height:29px;background:#c4c4c4;"></div>
<svg style="position:absolute;left:19px;top:1393px;" width="8" height="11" viewBox="0 0 8 11" fill="none"><ellipse cx="4" cy="2.36" rx="3.3" ry="1.76" stroke="#333" stroke-width="1.1"/><path d="M0.7 2.36v6.28c0 2.2 6.6 2.2 6.6 0v-6.28" stroke="#333" stroke-width="1.1"/></svg>
<div style="position:absolute;top:1387px;font-size:14.00px;line-height:20px;color:#666;white-space:pre;-webkit-text-stroke:0.16px #666;left:33.0px;transform:scaleX(0.8866);transform-origin:0 50%;">Data Source</div>
<div style="position:absolute;top:1387px;font-size:14.00px;line-height:20px;color:#666;white-space:pre;-webkit-text-stroke:0.16px #666;left:141.5px;transform:scaleX(0.8945);transform-origin:0 50%;">Customer sales</div>
<div style="position:absolute;top:1387px;font-size:14.00px;line-height:20px;color:#666;white-space:pre;-webkit-text-stroke:0.16px #666;left:243.0px;transform:scaleX(0.9455);transform-origin:0 50%;">Profit chart</div>
<div style="position:absolute;top:1387px;font-size:14.00px;line-height:20px;color:#666;white-space:pre;-webkit-text-stroke:0.16px #666;left:321.0px;transform:scaleX(0.8953);transform-origin:0 50%;">Sales Bubble Chart</div>
<div style="position:absolute;top:1387px;font-size:14.00px;line-height:20px;color:#666;white-space:pre;-webkit-text-stroke:0.16px #666;left:443.5px;transform:scaleX(0.8937);transform-origin:0 50%;">Cuisine Sales &amp; Profit</div>
<svg style="position:absolute;left:582px;top:1392px;" width="12" height="12" viewBox="0 0 12 12" fill="none"><rect x="0.600" y="0.600" width="10.800" height="10.800" stroke="#555" stroke-width="1.100"/><path d="M6 0.600v10.800M0.600 6h10.800" stroke="#555" stroke-width="1.100"/></svg>
<div style="position:absolute;top:1387px;font-size:14.00px;line-height:20px;color:#666;white-space:pre;-webkit-text-stroke:0.16px #666;left:598.5px;transform:scaleX(0.9056);transform-origin:0 50%;">Customer Dashboard</div>
<svg style="position:absolute;left:736px;top:1391px;" width="16" height="15" viewBox="0 0 16 15" fill="none"><rect x="0.600" y="0.600" width="10" height="8.500" stroke="#4a4a4a" stroke-width="1.100"/><path d="M3.200 7V5M5.600 7V3M8 7V4.200" stroke="#4a4a4a" stroke-width="1.100"/><path d="M11.500 8v6M8.500 11h6" stroke="#4a4a4a" stroke-width="1.600"/></svg>
<svg style="position:absolute;left:768px;top:1391px;" width="16" height="15" viewBox="0 0 16 15" fill="none"><rect x="0.600" y="0.600" width="10" height="8.500" stroke="#4a4a4a" stroke-width="1.100"/><path d="M5.600 0.600v8.500M0.600 4.800h10" stroke="#4a4a4a" stroke-width="1.100"/><path d="M11.500 8v6M8.500 11h6" stroke="#4a4a4a" stroke-width="1.600"/></svg>
<svg style="position:absolute;left:800px;top:1391px;" width="16" height="15" viewBox="0 0 16 15" fill="none"><path d="M0.600 1.200l4.500 1.500v7.500L0.600 8.700zM5.100 2.700l4.500-1.500v4" stroke="#4a4a4a" stroke-width="1.100"/><path d="M11.500 8v6M8.500 11h6" stroke="#4a4a4a" stroke-width="1.600"/></svg>
<div style="position:absolute;left:925px;top:325px;width:700px;height:284px;background:#fff;box-shadow:0 0 0 1px #cfcfcf,0 2px 14px rgba(0,0,0,0.170);"></div>
<div style="position:absolute;left:925px;top:325px;width:700px;height:30px;background:#f2f2f2;"></div>
<div style="position:absolute;top:329px;font-size:14.00px;line-height:20px;color:#333;white-space:pre;-webkit-text-stroke:0.16px #333;left:943.0px;transform:scaleX(0.8963);transform-origin:0 50%;">Edit Data Source Filters</div>
<svg style="position:absolute;left:1603.5px;top:333.5px;" width="13" height="13" viewBox="0 0 13 13" fill="none"><path d="M0.700 0.700l11.600 11.600M12.300 0.700L0.700 12.300" stroke="#333" stroke-width="1.100"/></svg>
<div style="position:absolute;left:943px;top:373px;width:664px;height:146px;background:#fff;border:1px solid #c4c4c4;box-sizing:border-box;"></div>
<div style="position:absolute;left:1240px;top:374px;width:1px;height:144px;background:#dcdcdc;"></div>
<div style="position:absolute;left:944px;top:397px;width:662px;height:1px;background:#cfcfcf;"></div>
<div style="position:absolute;left:944px;top:421px;width:662px;height:1px;background:#e6e6e6;"></div>
<div style="position:absolute;left:944px;top:445px;width:662px;height:1px;background:#e6e6e6;"></div>
<div style="position:absolute;left:944px;top:469px;width:662px;height:1px;background:#e6e6e6;"></div>
<div style="position:absolute;left:944px;top:493px;width:662px;height:1px;background:#e6e6e6;"></div>
<div style="position:absolute;top:374px;font-size:14.00px;line-height:20px;color:#333;white-space:pre;-webkit-text-stroke:0.16px #333;left:950.0px;transform:scaleX(0.9321);transform-origin:0 50%;">Filter</div>
<div style="position:absolute;top:374px;font-size:14.00px;line-height:20px;color:#333;white-space:pre;-webkit-text-stroke:0.16px #333;left:1247.0px;transform:scaleX(0.9113);transform-origin:0 50%;">Details</div>
<div style="position:absolute;top:399px;font-size:14.00px;line-height:20px;color:#333;white-space:pre;-webkit-text-stroke:0.16px #333;left:950.0px;transform:scaleX(0.9384);transform-origin:0 50%;">Country</div>
<div style="position:absolute;top:399px;font-size:14.00px;line-height:20px;color:#333;white-space:pre;-webkit-text-stroke:0.16px #333;left:1247.0px;transform:scaleX(0.9019);transform-origin:0 50%;">keeps United States</div>
<div style="position:absolute;left:943px;top:531px;width:89px;height:24px;background:#fff;border:1px solid #555;box-sizing:border-box;border-radius:2px;"></div>
<div style="position:absolute;top:532px;font-size:14.00px;line-height:20px;color:#2e2e2e;white-space:pre;-webkit-text-stroke:0.35px #2e2e2e;left:951.0px;transform:scaleX(0.9097);transform-origin:0 50%;">Add Filter</div>
<svg style="position:absolute;left:1017px;top:540px;" width="9" height="6" viewBox="0 0 9 6" fill="none"><path d="M0.500 0.500h8L4.500 5.500z" fill="#4a4a4a"/></svg>
<div style="position:absolute;left:1044px;top:531px;width:96px;height:24px;background:#fff;border:1px solid #c6c6c6;box-sizing:border-box;border-radius:2px;"></div>
<div style="position:absolute;top:532px;font-size:14.00px;line-height:20px;color:#c2c2c2;white-space:pre;-webkit-text-stroke:0.35px #c2c2c2;left:892.0px;width:400px;text-align:center;transform:scaleX(0.9326);transform-origin:50% 50%;">Edit</div>
<div style="position:absolute;left:1152px;top:531px;width:96px;height:24px;background:#fff;border:1px solid #c6c6c6;box-sizing:border-box;border-radius:2px;"></div>
<div style="position:absolute;top:532px;font-size:14.00px;line-height:20px;color:#c2c2c2;white-space:pre;-webkit-text-stroke:0.35px #c2c2c2;left:1000.0px;width:400px;text-align:center;transform:scaleX(0.8632);transform-origin:50% 50%;">Remove</div>
<div style="position:absolute;left:1403px;top:567px;width:96px;height:24px;background:#fff;border:1px solid #555;box-sizing:border-box;border-radius:2px;"></div>
<div style="position:absolute;top:568px;font-size:14.00px;line-height:20px;color:#2b2b2b;white-space:pre;-webkit-text-stroke:0.16px #2b2b2b;left:1251.0px;width:400px;text-align:center;transform:scaleX(0.8949);transform-origin:50% 50%;-webkit-text-stroke:0.300px #2b2b2b;">Cancel</div>
<div style="position:absolute;left:1511px;top:567px;width:96px;height:24px;background:#06628f;border-radius:2px;"></div>
<div style="position:absolute;top:568px;font-size:14.00px;line-height:20px;color:#fff;white-space:pre;-webkit-text-stroke:0.45px #fff;left:1359.0px;width:400px;text-align:center;transform:scaleX(0.8651);transform-origin:50% 50%;">OK</div>
<div style="position:absolute;left:2468px;top:1346.5px;width:52px;height:52px;background:#f0782c;border-radius:50%;box-shadow:0 2px 6px rgba(0,0,0,0.350);"></div>
<div style="position:absolute;top:1353px;font-size:31.00px;line-height:40px;color:#fff;white-space:pre;font-weight:bold;left:2294.0px;width:400px;text-align:center;transform:scaleX(0.9500);transform-origin:50% 50%;">?</div>
<svg style="position:absolute;left:1527px;top:1154px;filter:drop-shadow(0.500px 1px 0.800px rgba(0,0,0,0.400));" width="14" height="23" viewBox="0 0 14 23" fill="none"><path d="M2 2.300V16.200L5.300 13.500 8 20.200 10.300 19.200 7.600 12.500 11.200 11.900z" fill="#000" stroke="#fff" stroke-width="2.200" stroke-linejoin="round" style="paint-order:stroke"/></svg>
</div>
</body></html>
